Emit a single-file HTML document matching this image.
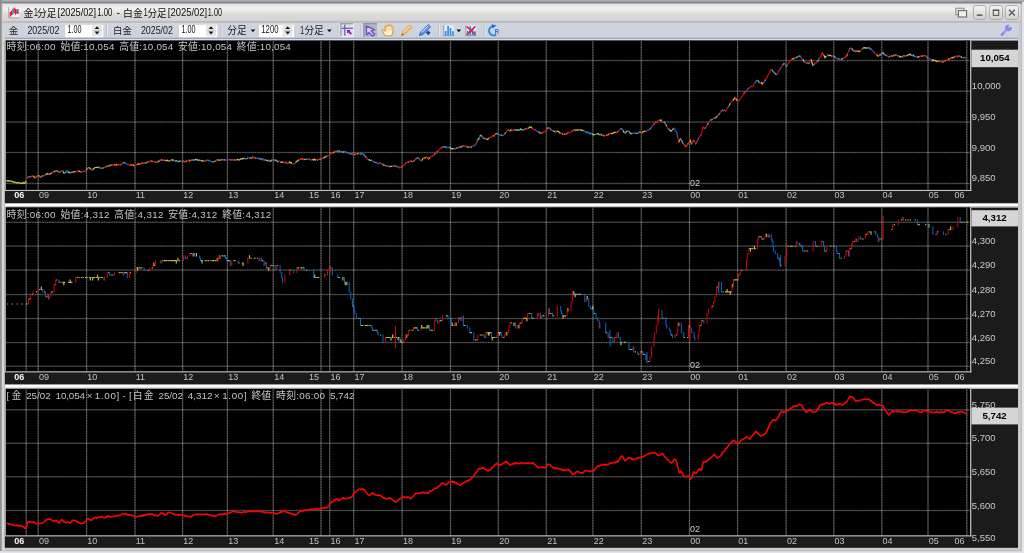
<!DOCTYPE html>
<html><head><meta charset="utf-8"><title>chart</title>
<style>html,body{margin:0;padding:0;background:#e4e4ec;overflow:hidden}body{width:1024px;height:553px;font-family:"Liberation Sans",sans-serif}svg text{white-space:pre;font-family:"Liberation Sans","Noto Sans CJK JP",sans-serif}
.xa{font-size:9px;fill:#c0c0c0}.xb{font-size:9px;fill:#f4f4f4;font-weight:bold}.ya{font-size:9.5px;fill:#c8c8c8}.mk{font-size:9px;fill:#c8c8c8}.in{font-size:9.8px;fill:#c4c4c4}.pt{font-size:9.7px;font-weight:bold;fill:#000}</style></head>
<body>
<svg width="1024" height="553" viewBox="0 0 1024 553" style="display:block">
<defs>
<linearGradient id="tb" x1="0" y1="0" x2="0" y2="1"><stop offset="0" stop-color="#e3e3e3"/><stop offset="0.3" stop-color="#f0f0f0"/><stop offset="0.62" stop-color="#d9d9d9"/><stop offset="1" stop-color="#d5d5d5"/></linearGradient>
<linearGradient id="btn" x1="0" y1="0" x2="0" y2="1"><stop offset="0" stop-color="#f6f6f6"/><stop offset="1" stop-color="#cfcfcf"/></linearGradient>
<linearGradient id="tool" x1="0" y1="0" x2="0" y2="1"><stop offset="0" stop-color="#d1d5df"/><stop offset="1" stop-color="#cdd1dc"/></linearGradient>
</defs>
<rect x="0" y="0" width="1024" height="553" fill="#e4e4ec"/>
<rect x="0" y="0" width="1024" height="2.0" fill="#a9adb9"/>
<rect x="0" y="1.6" width="1022" height="2.4" fill="#868686"/>
<rect x="0" y="0" width="1.8" height="551" fill="#8e8e90"/>
<rect x="1.8" y="3.9" width="1020.1" height="547.4" fill="#b6b6b6"/>
<rect x="2.2" y="3.6" width="1019" height="547" fill="#c9c9c9"/>
<rect x="2.2" y="3.6" width="2.6" height="547" fill="#d6d6d6"/>
<rect x="3" y="3.8" width="1017.2" height="18" fill="url(#tb)"/>
<rect x="5" y="21.8" width="1013.5" height="16.6" fill="url(#tool)"/>
<rect x="3" y="20.8" width="1017.2" height="2.2" fill="#c6c6c8"/>
<rect x="3" y="21.3" width="1017.2" height="1.2" fill="#b8b8ba"/>
<rect x="5" y="37.8" width="1013.5" height="1.1" fill="#8493b2"/>
<rect x="5" y="38.8" width="1013.5" height="1.9" fill="#d9dde5"/>
<rect x="4.8" y="40.6" width="1013.2" height="507.2" fill="#1b1b1b"/>
<rect x="4.8" y="203.4" width="1013.2" height="4.0" fill="#ffffff"/>
<rect x="4.8" y="203.4" width="1013.2" height="0.5" fill="#d4d4d4"/>
<rect x="4.8" y="206.2" width="1013.2" height="1.2" fill="#b4b4b4"/>
<rect x="4.8" y="384.6" width="1013.2" height="4.2" fill="#ffffff"/>
<rect x="4.8" y="384.6" width="1013.2" height="0.5" fill="#d4d4d4"/>
<rect x="4.8" y="387.6" width="1013.2" height="1.2" fill="#b4b4b4"/>
<rect x="5.8" y="40.6" width="964.6" height="149.8" fill="#000"/>
<line x1="26.2" y1="40.6" x2="26.2" y2="190.4" stroke="#262626" stroke-width="1.5"/>
<line x1="26.2" y1="40.6" x2="26.2" y2="190.4" stroke="#8c8c8c" stroke-width="0.85" stroke-dasharray="0.82 0.82"/>
<line x1="38.2" y1="40.6" x2="38.2" y2="190.4" stroke="#262626" stroke-width="1.5"/>
<line x1="38.2" y1="40.6" x2="38.2" y2="190.4" stroke="#8c8c8c" stroke-width="0.85" stroke-dasharray="0.82 0.82"/>
<line x1="86.6" y1="40.6" x2="86.6" y2="190.4" stroke="#262626" stroke-width="1.5"/>
<line x1="86.6" y1="40.6" x2="86.6" y2="190.4" stroke="#8c8c8c" stroke-width="0.85" stroke-dasharray="0.82 0.82"/>
<line x1="135" y1="40.6" x2="135" y2="190.4" stroke="#262626" stroke-width="1.5"/>
<line x1="135" y1="40.6" x2="135" y2="190.4" stroke="#8c8c8c" stroke-width="0.85" stroke-dasharray="0.82 0.82"/>
<line x1="182.6" y1="40.6" x2="182.6" y2="190.4" stroke="#262626" stroke-width="1.5"/>
<line x1="182.6" y1="40.6" x2="182.6" y2="190.4" stroke="#8c8c8c" stroke-width="0.85" stroke-dasharray="0.82 0.82"/>
<line x1="227.4" y1="40.6" x2="227.4" y2="190.4" stroke="#262626" stroke-width="1.5"/>
<line x1="227.4" y1="40.6" x2="227.4" y2="190.4" stroke="#8c8c8c" stroke-width="0.85" stroke-dasharray="0.82 0.82"/>
<line x1="273.2" y1="40.6" x2="273.2" y2="190.4" stroke="#262626" stroke-width="1.5"/>
<line x1="273.2" y1="40.6" x2="273.2" y2="190.4" stroke="#8c8c8c" stroke-width="0.85" stroke-dasharray="0.82 0.82"/>
<line x1="321" y1="40.6" x2="321" y2="190.4" stroke="#262626" stroke-width="1.5"/>
<line x1="321" y1="40.6" x2="321" y2="190.4" stroke="#8c8c8c" stroke-width="0.85" stroke-dasharray="0.82 0.82"/>
<line x1="329.7" y1="40.6" x2="329.7" y2="190.4" stroke="#262626" stroke-width="1.5"/>
<line x1="329.7" y1="40.6" x2="329.7" y2="190.4" stroke="#8c8c8c" stroke-width="0.85" stroke-dasharray="0.82 0.82"/>
<line x1="353.7" y1="40.6" x2="353.7" y2="190.4" stroke="#262626" stroke-width="1.5"/>
<line x1="353.7" y1="40.6" x2="353.7" y2="190.4" stroke="#8c8c8c" stroke-width="0.85" stroke-dasharray="0.82 0.82"/>
<line x1="402.1" y1="40.6" x2="402.1" y2="190.4" stroke="#262626" stroke-width="1.5"/>
<line x1="402.1" y1="40.6" x2="402.1" y2="190.4" stroke="#8c8c8c" stroke-width="0.85" stroke-dasharray="0.82 0.82"/>
<line x1="450.5" y1="40.6" x2="450.5" y2="190.4" stroke="#262626" stroke-width="1.5"/>
<line x1="450.5" y1="40.6" x2="450.5" y2="190.4" stroke="#8c8c8c" stroke-width="0.85" stroke-dasharray="0.82 0.82"/>
<line x1="498.3" y1="40.6" x2="498.3" y2="190.4" stroke="#262626" stroke-width="1.5"/>
<line x1="498.3" y1="40.6" x2="498.3" y2="190.4" stroke="#8c8c8c" stroke-width="0.85" stroke-dasharray="0.82 0.82"/>
<line x1="546.3" y1="40.6" x2="546.3" y2="190.4" stroke="#262626" stroke-width="1.5"/>
<line x1="546.3" y1="40.6" x2="546.3" y2="190.4" stroke="#8c8c8c" stroke-width="0.85" stroke-dasharray="0.82 0.82"/>
<line x1="592.9" y1="40.6" x2="592.9" y2="190.4" stroke="#262626" stroke-width="1.5"/>
<line x1="592.9" y1="40.6" x2="592.9" y2="190.4" stroke="#8c8c8c" stroke-width="0.85" stroke-dasharray="0.82 0.82"/>
<line x1="641.3" y1="40.6" x2="641.3" y2="190.4" stroke="#262626" stroke-width="1.5"/>
<line x1="641.3" y1="40.6" x2="641.3" y2="190.4" stroke="#8c8c8c" stroke-width="0.85" stroke-dasharray="0.82 0.82"/>
<line x1="689.5" y1="40.6" x2="689.5" y2="190.4" stroke="#262626" stroke-width="1.5"/>
<line x1="689.5" y1="40.6" x2="689.5" y2="190.4" stroke="#8c8c8c" stroke-width="0.85" stroke-dasharray="0.82 0.82"/>
<line x1="737.6" y1="40.6" x2="737.6" y2="190.4" stroke="#262626" stroke-width="1.5"/>
<line x1="737.6" y1="40.6" x2="737.6" y2="190.4" stroke="#8c8c8c" stroke-width="0.85" stroke-dasharray="0.82 0.82"/>
<line x1="786.1" y1="40.6" x2="786.1" y2="190.4" stroke="#262626" stroke-width="1.5"/>
<line x1="786.1" y1="40.6" x2="786.1" y2="190.4" stroke="#8c8c8c" stroke-width="0.85" stroke-dasharray="0.82 0.82"/>
<line x1="833.8" y1="40.6" x2="833.8" y2="190.4" stroke="#262626" stroke-width="1.5"/>
<line x1="833.8" y1="40.6" x2="833.8" y2="190.4" stroke="#8c8c8c" stroke-width="0.85" stroke-dasharray="0.82 0.82"/>
<line x1="881.8" y1="40.6" x2="881.8" y2="190.4" stroke="#262626" stroke-width="1.5"/>
<line x1="881.8" y1="40.6" x2="881.8" y2="190.4" stroke="#8c8c8c" stroke-width="0.85" stroke-dasharray="0.82 0.82"/>
<line x1="928" y1="40.6" x2="928" y2="190.4" stroke="#262626" stroke-width="1.5"/>
<line x1="928" y1="40.6" x2="928" y2="190.4" stroke="#8c8c8c" stroke-width="0.85" stroke-dasharray="0.82 0.82"/>
<line x1="966.8" y1="40.6" x2="966.8" y2="190.4" stroke="#262626" stroke-width="1.5"/>
<line x1="966.8" y1="40.6" x2="966.8" y2="190.4" stroke="#8c8c8c" stroke-width="0.85" stroke-dasharray="0.82 0.82"/>
<g style="mix-blend-mode:screen"><line x1="5.8" y1="60.6" x2="970.4" y2="60.6" stroke="#262626" stroke-width="1.5"/><line x1="5.8" y1="60.6" x2="970.4" y2="60.6" stroke="#707070" stroke-width="0.85" stroke-dasharray="0.82 0.82"/></g>
<g style="mix-blend-mode:screen"><line x1="5.8" y1="91.2" x2="970.4" y2="91.2" stroke="#262626" stroke-width="1.5"/><line x1="5.8" y1="91.2" x2="970.4" y2="91.2" stroke="#707070" stroke-width="0.85" stroke-dasharray="0.82 0.82"/></g>
<g style="mix-blend-mode:screen"><line x1="5.8" y1="122.1" x2="970.4" y2="122.1" stroke="#262626" stroke-width="1.5"/><line x1="5.8" y1="122.1" x2="970.4" y2="122.1" stroke="#707070" stroke-width="0.85" stroke-dasharray="0.82 0.82"/></g>
<g style="mix-blend-mode:screen"><line x1="5.8" y1="152.5" x2="970.4" y2="152.5" stroke="#262626" stroke-width="1.5"/><line x1="5.8" y1="152.5" x2="970.4" y2="152.5" stroke="#707070" stroke-width="0.85" stroke-dasharray="0.82 0.82"/></g>
<g style="mix-blend-mode:screen"><line x1="5.8" y1="183.4" x2="970.4" y2="183.4" stroke="#262626" stroke-width="1.5"/><line x1="5.8" y1="183.4" x2="970.4" y2="183.4" stroke="#707070" stroke-width="0.85" stroke-dasharray="0.82 0.82"/></g>
<rect x="4.8" y="40.6" width="1.0" height="149.8" fill="#bdbdbd"/>
<rect x="4.8" y="189.9" width="966.6" height="1.1" fill="#c6c6c6"/>
<rect x="970.1" y="40.6" width="1.2" height="150.4" fill="#c6c6c6"/>
<text class="xb" x="14.33" y="198.3">06</text>
<text class="xa" x="38.93" y="198.3">09</text>
<text class="xa" x="87.33" y="198.3">10</text>
<text class="xa" x="135.73" y="198.3">11</text>
<text class="xa" x="183.33" y="198.3">12</text>
<text class="xa" x="228.13" y="198.3">13</text>
<text class="xa" x="274.13" y="198.3">14</text>
<text class="xa" x="308.93" y="198.3">15</text>
<text class="xa" x="330.53" y="198.3">16</text>
<text class="xa" x="354.53" y="198.3">17</text>
<text class="xa" x="402.93" y="198.3">18</text>
<text class="xa" x="451.33" y="198.3">19</text>
<text class="xa" x="499.13" y="198.3">20</text>
<text class="xa" x="547.13" y="198.3">21</text>
<text class="xa" x="593.73" y="198.3">22</text>
<text class="xa" x="642.13" y="198.3">23</text>
<text class="xa" x="690.33" y="198.3">00</text>
<text class="xa" x="738.33" y="198.3">01</text>
<text class="xa" x="786.93" y="198.3">02</text>
<text class="xa" x="834.53" y="198.3">03</text>
<text class="xa" x="882.53" y="198.3">04</text>
<text class="xa" x="928.73" y="198.3">05</text>
<text class="xa" x="954.53" y="198.3">06</text>
<text class="ya" x="971.85" y="58.6">10,050</text>
<text class="ya" x="971.85" y="89.2">10,000</text>
<text class="ya" x="971.85" y="120.1">9,950</text>
<text class="ya" x="971.85" y="150.5">9,900</text>
<text class="ya" x="971.85" y="181.4">9,850</text>
<text class="mk" x="690.01" y="186.2">02</text>
<rect x="5.8" y="207.4" width="964.6" height="164.4" fill="#000"/>
<line x1="26.2" y1="207.4" x2="26.2" y2="371.8" stroke="#262626" stroke-width="1.5"/>
<line x1="26.2" y1="207.4" x2="26.2" y2="371.8" stroke="#8c8c8c" stroke-width="0.85" stroke-dasharray="0.82 0.82"/>
<line x1="38.2" y1="207.4" x2="38.2" y2="371.8" stroke="#262626" stroke-width="1.5"/>
<line x1="38.2" y1="207.4" x2="38.2" y2="371.8" stroke="#8c8c8c" stroke-width="0.85" stroke-dasharray="0.82 0.82"/>
<line x1="86.6" y1="207.4" x2="86.6" y2="371.8" stroke="#262626" stroke-width="1.5"/>
<line x1="86.6" y1="207.4" x2="86.6" y2="371.8" stroke="#8c8c8c" stroke-width="0.85" stroke-dasharray="0.82 0.82"/>
<line x1="135" y1="207.4" x2="135" y2="371.8" stroke="#262626" stroke-width="1.5"/>
<line x1="135" y1="207.4" x2="135" y2="371.8" stroke="#8c8c8c" stroke-width="0.85" stroke-dasharray="0.82 0.82"/>
<line x1="182.6" y1="207.4" x2="182.6" y2="371.8" stroke="#262626" stroke-width="1.5"/>
<line x1="182.6" y1="207.4" x2="182.6" y2="371.8" stroke="#8c8c8c" stroke-width="0.85" stroke-dasharray="0.82 0.82"/>
<line x1="227.4" y1="207.4" x2="227.4" y2="371.8" stroke="#262626" stroke-width="1.5"/>
<line x1="227.4" y1="207.4" x2="227.4" y2="371.8" stroke="#8c8c8c" stroke-width="0.85" stroke-dasharray="0.82 0.82"/>
<line x1="273.2" y1="207.4" x2="273.2" y2="371.8" stroke="#262626" stroke-width="1.5"/>
<line x1="273.2" y1="207.4" x2="273.2" y2="371.8" stroke="#8c8c8c" stroke-width="0.85" stroke-dasharray="0.82 0.82"/>
<line x1="321" y1="207.4" x2="321" y2="371.8" stroke="#262626" stroke-width="1.5"/>
<line x1="321" y1="207.4" x2="321" y2="371.8" stroke="#8c8c8c" stroke-width="0.85" stroke-dasharray="0.82 0.82"/>
<line x1="329.7" y1="207.4" x2="329.7" y2="371.8" stroke="#262626" stroke-width="1.5"/>
<line x1="329.7" y1="207.4" x2="329.7" y2="371.8" stroke="#8c8c8c" stroke-width="0.85" stroke-dasharray="0.82 0.82"/>
<line x1="353.7" y1="207.4" x2="353.7" y2="371.8" stroke="#262626" stroke-width="1.5"/>
<line x1="353.7" y1="207.4" x2="353.7" y2="371.8" stroke="#8c8c8c" stroke-width="0.85" stroke-dasharray="0.82 0.82"/>
<line x1="402.1" y1="207.4" x2="402.1" y2="371.8" stroke="#262626" stroke-width="1.5"/>
<line x1="402.1" y1="207.4" x2="402.1" y2="371.8" stroke="#8c8c8c" stroke-width="0.85" stroke-dasharray="0.82 0.82"/>
<line x1="450.5" y1="207.4" x2="450.5" y2="371.8" stroke="#262626" stroke-width="1.5"/>
<line x1="450.5" y1="207.4" x2="450.5" y2="371.8" stroke="#8c8c8c" stroke-width="0.85" stroke-dasharray="0.82 0.82"/>
<line x1="498.3" y1="207.4" x2="498.3" y2="371.8" stroke="#262626" stroke-width="1.5"/>
<line x1="498.3" y1="207.4" x2="498.3" y2="371.8" stroke="#8c8c8c" stroke-width="0.85" stroke-dasharray="0.82 0.82"/>
<line x1="546.3" y1="207.4" x2="546.3" y2="371.8" stroke="#262626" stroke-width="1.5"/>
<line x1="546.3" y1="207.4" x2="546.3" y2="371.8" stroke="#8c8c8c" stroke-width="0.85" stroke-dasharray="0.82 0.82"/>
<line x1="592.9" y1="207.4" x2="592.9" y2="371.8" stroke="#262626" stroke-width="1.5"/>
<line x1="592.9" y1="207.4" x2="592.9" y2="371.8" stroke="#8c8c8c" stroke-width="0.85" stroke-dasharray="0.82 0.82"/>
<line x1="641.3" y1="207.4" x2="641.3" y2="371.8" stroke="#262626" stroke-width="1.5"/>
<line x1="641.3" y1="207.4" x2="641.3" y2="371.8" stroke="#8c8c8c" stroke-width="0.85" stroke-dasharray="0.82 0.82"/>
<line x1="689.5" y1="207.4" x2="689.5" y2="371.8" stroke="#262626" stroke-width="1.5"/>
<line x1="689.5" y1="207.4" x2="689.5" y2="371.8" stroke="#8c8c8c" stroke-width="0.85" stroke-dasharray="0.82 0.82"/>
<line x1="737.6" y1="207.4" x2="737.6" y2="371.8" stroke="#262626" stroke-width="1.5"/>
<line x1="737.6" y1="207.4" x2="737.6" y2="371.8" stroke="#8c8c8c" stroke-width="0.85" stroke-dasharray="0.82 0.82"/>
<line x1="786.1" y1="207.4" x2="786.1" y2="371.8" stroke="#262626" stroke-width="1.5"/>
<line x1="786.1" y1="207.4" x2="786.1" y2="371.8" stroke="#8c8c8c" stroke-width="0.85" stroke-dasharray="0.82 0.82"/>
<line x1="833.8" y1="207.4" x2="833.8" y2="371.8" stroke="#262626" stroke-width="1.5"/>
<line x1="833.8" y1="207.4" x2="833.8" y2="371.8" stroke="#8c8c8c" stroke-width="0.85" stroke-dasharray="0.82 0.82"/>
<line x1="881.8" y1="207.4" x2="881.8" y2="371.8" stroke="#262626" stroke-width="1.5"/>
<line x1="881.8" y1="207.4" x2="881.8" y2="371.8" stroke="#8c8c8c" stroke-width="0.85" stroke-dasharray="0.82 0.82"/>
<line x1="928" y1="207.4" x2="928" y2="371.8" stroke="#262626" stroke-width="1.5"/>
<line x1="928" y1="207.4" x2="928" y2="371.8" stroke="#8c8c8c" stroke-width="0.85" stroke-dasharray="0.82 0.82"/>
<line x1="966.8" y1="207.4" x2="966.8" y2="371.8" stroke="#262626" stroke-width="1.5"/>
<line x1="966.8" y1="207.4" x2="966.8" y2="371.8" stroke="#8c8c8c" stroke-width="0.85" stroke-dasharray="0.82 0.82"/>
<g style="mix-blend-mode:screen"><line x1="5.8" y1="222.3" x2="970.4" y2="222.3" stroke="#262626" stroke-width="1.5"/><line x1="5.8" y1="222.3" x2="970.4" y2="222.3" stroke="#707070" stroke-width="0.85" stroke-dasharray="0.82 0.82"/></g>
<g style="mix-blend-mode:screen"><line x1="5.8" y1="246.1" x2="970.4" y2="246.1" stroke="#262626" stroke-width="1.5"/><line x1="5.8" y1="246.1" x2="970.4" y2="246.1" stroke="#707070" stroke-width="0.85" stroke-dasharray="0.82 0.82"/></g>
<g style="mix-blend-mode:screen"><line x1="5.8" y1="270.1" x2="970.4" y2="270.1" stroke="#262626" stroke-width="1.5"/><line x1="5.8" y1="270.1" x2="970.4" y2="270.1" stroke="#707070" stroke-width="0.85" stroke-dasharray="0.82 0.82"/></g>
<g style="mix-blend-mode:screen"><line x1="5.8" y1="294.6" x2="970.4" y2="294.6" stroke="#262626" stroke-width="1.5"/><line x1="5.8" y1="294.6" x2="970.4" y2="294.6" stroke="#707070" stroke-width="0.85" stroke-dasharray="0.82 0.82"/></g>
<g style="mix-blend-mode:screen"><line x1="5.8" y1="318.6" x2="970.4" y2="318.6" stroke="#262626" stroke-width="1.5"/><line x1="5.8" y1="318.6" x2="970.4" y2="318.6" stroke="#707070" stroke-width="0.85" stroke-dasharray="0.82 0.82"/></g>
<g style="mix-blend-mode:screen"><line x1="5.8" y1="342.6" x2="970.4" y2="342.6" stroke="#262626" stroke-width="1.5"/><line x1="5.8" y1="342.6" x2="970.4" y2="342.6" stroke="#707070" stroke-width="0.85" stroke-dasharray="0.82 0.82"/></g>
<g style="mix-blend-mode:screen"><line x1="5.8" y1="366.3" x2="970.4" y2="366.3" stroke="#262626" stroke-width="1.5"/><line x1="5.8" y1="366.3" x2="970.4" y2="366.3" stroke="#707070" stroke-width="0.85" stroke-dasharray="0.82 0.82"/></g>
<rect x="4.8" y="207.4" width="1.0" height="164.4" fill="#bdbdbd"/>
<rect x="4.8" y="371.3" width="966.6" height="1.1" fill="#c6c6c6"/>
<rect x="970.1" y="207.4" width="1.2" height="165.0" fill="#c6c6c6"/>
<text class="xb" x="14.33" y="379.7">06</text>
<text class="xa" x="38.93" y="379.7">09</text>
<text class="xa" x="87.33" y="379.7">10</text>
<text class="xa" x="135.73" y="379.7">11</text>
<text class="xa" x="183.33" y="379.7">12</text>
<text class="xa" x="228.13" y="379.7">13</text>
<text class="xa" x="274.13" y="379.7">14</text>
<text class="xa" x="308.93" y="379.7">15</text>
<text class="xa" x="330.53" y="379.7">16</text>
<text class="xa" x="354.53" y="379.7">17</text>
<text class="xa" x="402.93" y="379.7">18</text>
<text class="xa" x="451.33" y="379.7">19</text>
<text class="xa" x="499.13" y="379.7">20</text>
<text class="xa" x="547.13" y="379.7">21</text>
<text class="xa" x="593.73" y="379.7">22</text>
<text class="xa" x="642.13" y="379.7">23</text>
<text class="xa" x="690.33" y="379.7">00</text>
<text class="xa" x="738.33" y="379.7">01</text>
<text class="xa" x="786.93" y="379.7">02</text>
<text class="xa" x="834.53" y="379.7">03</text>
<text class="xa" x="882.53" y="379.7">04</text>
<text class="xa" x="928.73" y="379.7">05</text>
<text class="xa" x="954.53" y="379.7">06</text>
<text class="ya" x="971.85" y="220.3">4,310</text>
<text class="ya" x="971.85" y="244.1">4,300</text>
<text class="ya" x="971.85" y="268.1">4,290</text>
<text class="ya" x="971.85" y="292.6">4,280</text>
<text class="ya" x="971.85" y="316.6">4,270</text>
<text class="ya" x="971.85" y="340.6">4,260</text>
<text class="ya" x="971.85" y="364.3">4,250</text>
<text class="mk" x="690.01" y="367.6">02</text>
<rect x="5.8" y="388.8" width="964.6" height="147.0" fill="#000"/>
<line x1="26.2" y1="388.8" x2="26.2" y2="535.8" stroke="#262626" stroke-width="1.5"/>
<line x1="26.2" y1="388.8" x2="26.2" y2="535.8" stroke="#8c8c8c" stroke-width="0.85" stroke-dasharray="0.82 0.82"/>
<line x1="38.2" y1="388.8" x2="38.2" y2="535.8" stroke="#262626" stroke-width="1.5"/>
<line x1="38.2" y1="388.8" x2="38.2" y2="535.8" stroke="#8c8c8c" stroke-width="0.85" stroke-dasharray="0.82 0.82"/>
<line x1="86.6" y1="388.8" x2="86.6" y2="535.8" stroke="#262626" stroke-width="1.5"/>
<line x1="86.6" y1="388.8" x2="86.6" y2="535.8" stroke="#8c8c8c" stroke-width="0.85" stroke-dasharray="0.82 0.82"/>
<line x1="135" y1="388.8" x2="135" y2="535.8" stroke="#262626" stroke-width="1.5"/>
<line x1="135" y1="388.8" x2="135" y2="535.8" stroke="#8c8c8c" stroke-width="0.85" stroke-dasharray="0.82 0.82"/>
<line x1="182.6" y1="388.8" x2="182.6" y2="535.8" stroke="#262626" stroke-width="1.5"/>
<line x1="182.6" y1="388.8" x2="182.6" y2="535.8" stroke="#8c8c8c" stroke-width="0.85" stroke-dasharray="0.82 0.82"/>
<line x1="227.4" y1="388.8" x2="227.4" y2="535.8" stroke="#262626" stroke-width="1.5"/>
<line x1="227.4" y1="388.8" x2="227.4" y2="535.8" stroke="#8c8c8c" stroke-width="0.85" stroke-dasharray="0.82 0.82"/>
<line x1="273.2" y1="388.8" x2="273.2" y2="535.8" stroke="#262626" stroke-width="1.5"/>
<line x1="273.2" y1="388.8" x2="273.2" y2="535.8" stroke="#8c8c8c" stroke-width="0.85" stroke-dasharray="0.82 0.82"/>
<line x1="321" y1="388.8" x2="321" y2="535.8" stroke="#262626" stroke-width="1.5"/>
<line x1="321" y1="388.8" x2="321" y2="535.8" stroke="#8c8c8c" stroke-width="0.85" stroke-dasharray="0.82 0.82"/>
<line x1="329.7" y1="388.8" x2="329.7" y2="535.8" stroke="#262626" stroke-width="1.5"/>
<line x1="329.7" y1="388.8" x2="329.7" y2="535.8" stroke="#8c8c8c" stroke-width="0.85" stroke-dasharray="0.82 0.82"/>
<line x1="353.7" y1="388.8" x2="353.7" y2="535.8" stroke="#262626" stroke-width="1.5"/>
<line x1="353.7" y1="388.8" x2="353.7" y2="535.8" stroke="#8c8c8c" stroke-width="0.85" stroke-dasharray="0.82 0.82"/>
<line x1="402.1" y1="388.8" x2="402.1" y2="535.8" stroke="#262626" stroke-width="1.5"/>
<line x1="402.1" y1="388.8" x2="402.1" y2="535.8" stroke="#8c8c8c" stroke-width="0.85" stroke-dasharray="0.82 0.82"/>
<line x1="450.5" y1="388.8" x2="450.5" y2="535.8" stroke="#262626" stroke-width="1.5"/>
<line x1="450.5" y1="388.8" x2="450.5" y2="535.8" stroke="#8c8c8c" stroke-width="0.85" stroke-dasharray="0.82 0.82"/>
<line x1="498.3" y1="388.8" x2="498.3" y2="535.8" stroke="#262626" stroke-width="1.5"/>
<line x1="498.3" y1="388.8" x2="498.3" y2="535.8" stroke="#8c8c8c" stroke-width="0.85" stroke-dasharray="0.82 0.82"/>
<line x1="546.3" y1="388.8" x2="546.3" y2="535.8" stroke="#262626" stroke-width="1.5"/>
<line x1="546.3" y1="388.8" x2="546.3" y2="535.8" stroke="#8c8c8c" stroke-width="0.85" stroke-dasharray="0.82 0.82"/>
<line x1="592.9" y1="388.8" x2="592.9" y2="535.8" stroke="#262626" stroke-width="1.5"/>
<line x1="592.9" y1="388.8" x2="592.9" y2="535.8" stroke="#8c8c8c" stroke-width="0.85" stroke-dasharray="0.82 0.82"/>
<line x1="641.3" y1="388.8" x2="641.3" y2="535.8" stroke="#262626" stroke-width="1.5"/>
<line x1="641.3" y1="388.8" x2="641.3" y2="535.8" stroke="#8c8c8c" stroke-width="0.85" stroke-dasharray="0.82 0.82"/>
<line x1="689.5" y1="388.8" x2="689.5" y2="535.8" stroke="#262626" stroke-width="1.5"/>
<line x1="689.5" y1="388.8" x2="689.5" y2="535.8" stroke="#8c8c8c" stroke-width="0.85" stroke-dasharray="0.82 0.82"/>
<line x1="737.6" y1="388.8" x2="737.6" y2="535.8" stroke="#262626" stroke-width="1.5"/>
<line x1="737.6" y1="388.8" x2="737.6" y2="535.8" stroke="#8c8c8c" stroke-width="0.85" stroke-dasharray="0.82 0.82"/>
<line x1="786.1" y1="388.8" x2="786.1" y2="535.8" stroke="#262626" stroke-width="1.5"/>
<line x1="786.1" y1="388.8" x2="786.1" y2="535.8" stroke="#8c8c8c" stroke-width="0.85" stroke-dasharray="0.82 0.82"/>
<line x1="833.8" y1="388.8" x2="833.8" y2="535.8" stroke="#262626" stroke-width="1.5"/>
<line x1="833.8" y1="388.8" x2="833.8" y2="535.8" stroke="#8c8c8c" stroke-width="0.85" stroke-dasharray="0.82 0.82"/>
<line x1="881.8" y1="388.8" x2="881.8" y2="535.8" stroke="#262626" stroke-width="1.5"/>
<line x1="881.8" y1="388.8" x2="881.8" y2="535.8" stroke="#8c8c8c" stroke-width="0.85" stroke-dasharray="0.82 0.82"/>
<line x1="928" y1="388.8" x2="928" y2="535.8" stroke="#262626" stroke-width="1.5"/>
<line x1="928" y1="388.8" x2="928" y2="535.8" stroke="#8c8c8c" stroke-width="0.85" stroke-dasharray="0.82 0.82"/>
<line x1="966.8" y1="388.8" x2="966.8" y2="535.8" stroke="#262626" stroke-width="1.5"/>
<line x1="966.8" y1="388.8" x2="966.8" y2="535.8" stroke="#8c8c8c" stroke-width="0.85" stroke-dasharray="0.82 0.82"/>
<g style="mix-blend-mode:screen"><line x1="5.8" y1="409.8" x2="970.4" y2="409.8" stroke="#262626" stroke-width="1.5"/><line x1="5.8" y1="409.8" x2="970.4" y2="409.8" stroke="#707070" stroke-width="0.85" stroke-dasharray="0.82 0.82"/></g>
<g style="mix-blend-mode:screen"><line x1="5.8" y1="443.3" x2="970.4" y2="443.3" stroke="#262626" stroke-width="1.5"/><line x1="5.8" y1="443.3" x2="970.4" y2="443.3" stroke="#707070" stroke-width="0.85" stroke-dasharray="0.82 0.82"/></g>
<g style="mix-blend-mode:screen"><line x1="5.8" y1="476.8" x2="970.4" y2="476.8" stroke="#262626" stroke-width="1.5"/><line x1="5.8" y1="476.8" x2="970.4" y2="476.8" stroke="#707070" stroke-width="0.85" stroke-dasharray="0.82 0.82"/></g>
<g style="mix-blend-mode:screen"><line x1="5.8" y1="510.5" x2="970.4" y2="510.5" stroke="#262626" stroke-width="1.5"/><line x1="5.8" y1="510.5" x2="970.4" y2="510.5" stroke="#707070" stroke-width="0.85" stroke-dasharray="0.82 0.82"/></g>
<rect x="4.8" y="388.8" width="1.0" height="147.0" fill="#bdbdbd"/>
<rect x="4.8" y="535.3" width="966.6" height="1.1" fill="#c6c6c6"/>
<rect x="970.1" y="388.8" width="1.2" height="147.6" fill="#c6c6c6"/>
<text class="xb" x="14.33" y="543.7">06</text>
<text class="xa" x="38.93" y="543.7">09</text>
<text class="xa" x="87.33" y="543.7">10</text>
<text class="xa" x="135.73" y="543.7">11</text>
<text class="xa" x="183.33" y="543.7">12</text>
<text class="xa" x="228.13" y="543.7">13</text>
<text class="xa" x="274.13" y="543.7">14</text>
<text class="xa" x="308.93" y="543.7">15</text>
<text class="xa" x="330.53" y="543.7">16</text>
<text class="xa" x="354.53" y="543.7">17</text>
<text class="xa" x="402.93" y="543.7">18</text>
<text class="xa" x="451.33" y="543.7">19</text>
<text class="xa" x="499.13" y="543.7">20</text>
<text class="xa" x="547.13" y="543.7">21</text>
<text class="xa" x="593.73" y="543.7">22</text>
<text class="xa" x="642.13" y="543.7">23</text>
<text class="xa" x="690.33" y="543.7">00</text>
<text class="xa" x="738.33" y="543.7">01</text>
<text class="xa" x="786.93" y="543.7">02</text>
<text class="xa" x="834.53" y="543.7">03</text>
<text class="xa" x="882.53" y="543.7">04</text>
<text class="xa" x="928.73" y="543.7">05</text>
<text class="xa" x="954.53" y="543.7">06</text>
<text class="ya" x="971.85" y="407.8">5,750</text>
<text class="ya" x="971.85" y="441.3">5,700</text>
<text class="ya" x="971.85" y="474.8">5,650</text>
<text class="ya" x="971.85" y="508.5">5,600</text>
<text class="ya" x="971.85" y="541.3">5,550</text>
<text class="mk" x="690.01" y="531.6">02</text>
<path d="M6.5 180.8L7.3 180.7M7.3 180.7L8.1 181.3M8.1 181.3L8.9 180.7M8.9 180.7L9.7 181.2M9.7 181.2L10.5 181.1M10.5 181.1L11.3 180.9M11.3 180.9L12.1 181.7M12.1 181.7L12.9 181.5M12.9 181.5L13.7 182.3M13.7 182.3L14.5 182.1M14.5 182.1L15.3 182.2M15.3 182.2L16.1 182.6M16.1 182.6L17.0 183.1M17.0 183.1L17.8 182.4M17.8 182.4L18.6 182.6M18.6 182.6L19.4 183.1M19.4 183.1L20.2 183.5M20.2 183.5L21.0 183.1M21.0 183.1L21.8 182.9M21.8 182.9L22.6 183.5M22.6 183.5L23.4 182.5M23.4 182.5L24.2 183.4M24.2 183.4L25.0 182.8M25.0 182.8L25.8 181.6M27.4 177.4L28.2 177.6M29.0 176.6L29.8 176.7M30.6 176.7L31.4 176.4M33.0 176.0L33.8 176.6M33.8 176.6L34.6 177.4M34.6 177.4L35.4 177.8M36.2 176.9L37.1 176.2M37.9 175.8L38.7 175.8M38.7 175.8L39.5 176.0M40.3 176.9L41.1 177.1M41.9 176.1L42.7 176.1M42.7 176.1L43.5 175.6M45.9 174.2L46.7 174.6M46.7 174.6L47.5 173.3M47.5 173.3L48.3 173.9M49.1 174.5L49.9 174.0M49.9 174.0L50.7 173.9M50.7 173.9L51.5 172.8M53.9 171.6L54.7 171.7M54.7 171.7L55.5 170.8M56.3 171.0L57.2 170.8M57.2 170.8L58.0 171.5M58.8 172.0L59.6 172.3M62.8 171.1L63.6 172.8M63.6 172.8L64.4 173.0M64.4 173.0L65.2 172.9M66.0 172.2L66.8 171.1M67.6 171.5L68.4 172.3M68.4 172.3L69.2 172.1M69.2 172.1L70.0 173.1M70.8 172.5L71.6 172.3M71.6 172.3L72.4 172.0M73.2 172.6L74.0 171.7M74.0 171.7L74.8 171.7M74.8 171.7L75.6 171.6M78.1 171.2L78.9 171.1M78.9 171.1L79.7 171.6M79.7 171.6L80.5 171.8M82.9 171.5L83.7 171.2M86.1 170.1L86.9 169.2M86.9 169.2L87.7 168.4M88.5 167.5L89.3 167.6M89.3 167.6L90.1 168.6M90.1 168.6L90.9 169.1M92.5 169.9L93.3 169.0M93.3 169.0L94.1 168.3M94.1 168.3L94.9 167.8M94.9 167.8L95.7 167.5M95.7 167.5L96.5 167.3M96.5 167.3L97.4 167.5M97.4 167.5L98.2 167.6M98.2 167.6L99.0 167.0M100.6 167.9L101.4 168.2M102.2 168.3L103.0 168.0M103.0 168.0L103.8 167.7M106.2 166.6L107.0 166.3M107.0 166.3L107.8 166.2M108.6 165.9L109.4 165.9M109.4 165.9L110.2 165.3M110.2 165.3L111.0 165.0M111.0 165.0L111.8 165.0M111.8 165.0L112.6 164.7M114.2 164.4L115.0 165.3M115.8 165.0L116.6 164.5M116.6 164.5L117.5 164.6M118.3 164.6L119.1 164.6M120.7 164.8L121.5 164.5M123.1 163.0L123.9 162.4M123.9 162.4L124.7 162.7M130.3 165.1L131.1 164.7M131.1 164.7L131.9 165.2M132.7 164.6L133.5 165.2M133.5 165.2L134.3 165.8M136.7 164.5L137.6 164.3M137.6 164.3L138.4 163.9M138.4 163.9L139.2 164.3M140.0 163.8L140.8 163.9M142.4 162.9L143.2 163.4M144.8 163.1L145.6 162.8M145.6 162.8L146.4 162.7M147.2 162.4L148.0 161.6M148.8 161.8L149.6 161.4M151.2 161.0L152.0 161.3M152.0 161.3L152.8 161.3M155.2 161.6L156.0 162.2M157.7 162.2L158.5 161.4M158.5 161.4L159.3 160.8M160.1 160.4L160.9 160.0M161.7 159.6L162.5 160.0M163.3 160.4L164.1 160.5M164.9 160.2L165.7 160.5M165.7 160.5L166.5 160.8M166.5 160.8L167.3 160.2M167.3 160.2L168.1 160.9M168.1 160.9L168.9 161.0M168.9 161.0L169.7 160.7M169.7 160.7L170.5 160.6M171.3 160.1L172.1 159.7M172.1 159.7L172.9 160.5M172.9 160.5L173.7 160.1M175.3 161.1L176.1 160.7M176.1 160.7L176.9 160.8M177.8 161.6L178.6 161.5M178.6 161.5L179.4 161.0M179.4 161.0L180.2 161.1M182.6 161.7L183.4 160.9M184.2 161.6L185.0 161.7M185.8 161.3L186.6 160.9M189.0 160.2L189.8 161.1M189.8 161.1L190.6 160.5M191.4 160.2L192.2 160.4M193.0 159.7L193.8 160.0M194.6 160.0L195.4 159.4M195.4 159.4L196.2 159.6M196.2 159.6L197.0 159.8M197.0 159.8L197.9 159.9M197.9 159.9L198.7 160.4M198.7 160.4L199.5 160.1M200.3 160.5L201.1 160.3M201.1 160.3L201.9 161.2M201.9 161.2L202.7 160.7M202.7 160.7L203.5 161.0M203.5 161.0L204.3 161.2M205.9 160.5L206.7 160.4M208.3 160.4L209.1 160.7M211.5 161.5L212.3 161.6M213.9 161.6L214.7 161.4M214.7 161.4L215.5 161.2M217.1 159.8L218.0 160.0M218.0 160.0L218.8 160.0M218.8 160.0L219.6 160.3M219.6 160.3L220.4 159.5M221.2 160.0L222.0 159.6M222.0 159.6L222.8 159.6M224.4 159.8L225.2 159.9M230.8 159.9L231.6 159.6M232.4 159.7L233.2 159.6M234.0 160.1L234.8 159.8M236.4 160.1L237.2 159.3M237.2 159.3L238.1 159.6M238.1 159.6L238.9 160.0M238.9 160.0L239.7 159.9M239.7 159.9L240.5 159.0M240.5 159.0L241.3 158.9M241.3 158.9L242.1 159.1M242.1 159.1L242.9 158.5M242.9 158.5L243.7 158.6M243.7 158.6L244.5 158.2M245.3 158.7L246.1 158.7M246.9 158.7L247.7 157.8M250.1 157.4L250.9 158.1M250.9 158.1L251.7 158.1M252.5 157.2L253.3 157.8M254.9 157.5L255.7 158.3M258.2 158.4L259.0 158.7M259.8 158.8L260.6 158.8M260.6 158.8L261.4 159.1M262.2 159.7L263.0 159.1M264.6 159.9L265.4 159.6M266.2 160.2L267.0 160.7M267.0 160.7L267.8 160.7M267.8 160.7L268.6 160.2M269.4 161.2L270.2 160.9M270.2 160.9L271.0 161.1M271.0 161.1L271.8 160.0M273.4 159.9L274.2 160.6M275.0 160.0L275.8 160.1M275.8 160.1L276.6 160.7M276.6 160.7L277.4 161.4M277.4 161.4L278.3 161.6M280.7 162.3L281.5 162.1M281.5 162.1L282.3 162.4M282.3 162.4L283.1 161.8M285.5 162.6L286.3 162.4M288.7 162.9L289.5 161.9M289.5 161.9L290.3 162.8M290.3 162.8L291.1 162.3M291.1 162.3L291.9 163.6M295.9 162.2L296.7 161.3M296.7 161.3L297.5 161.0M297.5 161.0L298.4 160.1M298.4 160.1L299.2 159.7M300.8 159.1L301.6 159.1M302.4 159.1L303.2 159.1M304.0 159.7L304.8 159.2M304.8 159.2L305.6 159.5M305.6 159.5L306.4 159.2M308.8 159.4L309.6 159.2M312.0 159.4L312.8 159.6M312.8 159.6L313.6 160.1M313.6 160.1L314.4 159.2M314.4 159.2L315.2 160.0M315.2 160.0L316.0 159.5M317.6 159.9L318.5 159.4M319.3 159.4L320.1 159.3M320.1 159.3L320.9 159.3M323.3 158.0L324.1 157.6M324.1 157.6L324.9 157.1M324.9 157.1L325.7 156.8M325.7 156.8L326.5 156.2M330.5 153.6L331.3 152.9M332.9 152.9L333.7 152.3M333.7 152.3L334.5 151.7M335.3 151.4L336.1 151.3M336.9 151.4L337.7 150.9M338.6 151.0L339.4 150.8M339.4 150.8L340.2 151.7M341.0 151.8L341.8 151.5M342.6 151.3L343.4 152.2M343.4 152.2L344.2 151.7M347.4 152.8L348.2 153.1M349.8 153.7L350.6 153.4M351.4 154.0L352.2 154.1M353.8 154.7L354.6 154.4M354.6 154.4L355.4 154.3M357.0 153.8L357.8 153.4M357.8 153.4L358.7 153.6M359.5 153.5L360.3 153.6M361.1 153.9L361.9 153.4M363.5 154.8L364.3 154.5M365.1 156.3L365.9 157.3M368.3 159.7L369.1 159.7M369.1 159.7L369.9 160.2M369.9 160.2L370.7 160.6M370.7 160.6L371.5 160.2M374.7 162.2L375.5 162.5M375.5 162.5L376.3 162.5M378.8 163.5L379.6 163.2M382.8 164.2L383.6 165.2M383.6 165.2L384.4 165.2M385.2 165.6L386.0 165.9M389.2 166.6L390.0 166.5M390.0 166.5L390.8 166.3M390.8 166.3L391.6 166.3M391.6 166.3L392.4 166.4M394.8 166.0L395.6 165.9M398.9 167.3L399.7 167.7M401.3 167.4L402.1 166.7M408.5 162.3L409.3 161.4M410.9 161.0L411.7 161.3M411.7 161.3L412.5 161.7M413.3 161.4L414.1 160.7M415.7 158.9L416.5 158.4M418.1 158.1L419.0 158.4M421.4 160.6L422.2 159.9M422.2 159.9L423.0 158.3M423.8 158.2L424.6 158.0M424.6 158.0L425.4 157.6M425.4 157.6L426.2 157.3M427.0 157.5L427.8 157.9M428.6 159.2L429.4 157.9M429.4 157.9L430.2 157.7M434.2 154.7L435.0 153.7M436.6 152.5L437.4 151.3M442.3 147.2L443.1 146.8M443.9 146.7L444.7 147.0M445.5 147.0L446.3 147.6M449.5 147.0L450.3 148.1M450.3 148.1L451.1 148.3M451.1 148.3L451.9 148.9M451.9 148.9L452.7 148.6M452.7 148.6L453.5 148.7M453.5 148.7L454.3 148.6M455.9 148.5L456.7 148.0M458.3 147.6L459.2 147.2M460.0 147.1L460.8 147.4M460.8 147.4L461.6 146.3M462.4 146.6L463.2 145.8M466.4 146.4L467.2 147.1M467.2 147.1L468.0 147.2M468.0 147.2L468.8 147.2M470.4 147.3L471.2 147.1M471.2 147.1L472.0 146.4M477.6 140.4L478.4 138.7M478.4 138.7L479.3 138.2M480.1 135.9L480.9 135.1M480.9 135.1L481.7 136.1M483.3 138.1L484.1 138.7M484.1 138.7L484.9 138.2M486.5 138.9L487.3 139.5M487.3 139.5L488.1 139.0M488.1 139.0L488.9 138.2M492.9 135.6L493.7 135.9M493.7 135.9L494.5 135.4M495.3 134.3L496.1 133.4M496.1 133.4L496.9 133.7M497.7 134.0L498.5 134.6M501.0 135.1L501.8 135.3M501.8 135.3L502.6 135.6M505.0 133.5L505.8 132.7M508.2 130.2L509.0 130.4M509.8 131.0L510.6 130.0M510.6 130.0L511.4 130.4M511.4 130.4L512.2 130.4M513.8 129.8L514.6 129.8M515.4 129.7L516.2 129.8M516.2 129.8L517.0 129.8M517.0 129.8L517.8 130.4M517.8 130.4L518.6 130.2M519.5 130.2L520.3 129.2M520.3 129.2L521.1 129.2M521.1 129.2L521.9 129.9M521.9 129.9L522.7 130.1M523.5 129.5L524.3 129.6M525.1 128.9L525.9 128.9M527.5 128.5L528.3 128.1M528.3 128.1L529.1 127.7M529.1 127.7L529.9 126.9M529.9 126.9L530.7 127.1M530.7 127.1L531.5 127.5M531.5 127.5L532.3 128.3M538.7 131.6L539.6 133.0M540.4 132.7L541.2 133.3M542.0 132.9L542.8 132.4M546.8 129.0L547.6 128.2M548.4 127.9L549.2 128.0M550.0 128.6L550.8 129.3M553.2 131.0L554.0 131.2M554.0 131.2L554.8 131.8M554.8 131.8L555.6 131.4M556.4 131.7L557.2 131.2M557.2 131.2L558.0 131.3M558.0 131.3L558.8 131.8M558.8 131.8L559.7 133.0M559.7 133.0L560.5 133.2M562.1 133.4L562.9 134.4M562.9 134.4L563.7 134.5M564.5 134.0L565.3 133.6M566.1 133.8L566.9 133.9M567.7 132.9L568.5 132.4M572.5 131.1L573.3 130.5M574.1 130.0L574.9 129.7M574.9 129.7L575.7 130.5M576.5 129.8L577.3 130.4M577.3 130.4L578.1 129.7M578.1 129.7L578.9 129.7M579.8 130.3L580.6 129.8M580.6 129.8L581.4 130.5M581.4 130.5L582.2 130.4M582.2 130.4L583.0 130.3M583.0 130.3L583.8 130.7M586.2 132.5L587.0 131.9M587.8 132.5L588.6 132.6M589.4 133.8L590.2 133.2M591.8 133.7L592.6 134.4M592.6 134.4L593.4 134.8M593.4 134.8L594.2 134.7M594.2 134.7L595.0 134.4M595.0 134.4L595.8 134.5M596.6 134.4L597.4 133.6M597.4 133.6L598.2 133.6M598.2 133.6L599.0 134.7M599.0 134.7L599.9 134.7M600.7 134.2L601.5 135.2M601.5 135.2L602.3 135.2M603.1 135.4L603.9 135.7M603.9 135.7L604.7 135.8M606.3 135.4L607.1 135.0M607.9 135.3L608.7 134.0M610.3 133.4L611.1 133.3M611.1 133.3L611.9 133.7M611.9 133.7L612.7 133.5M612.7 133.5L613.5 132.9M613.5 132.9L614.3 132.2M614.3 132.2L615.1 132.5M615.1 132.5L615.9 132.2M616.7 132.6L617.5 131.6M620.8 129.0L621.6 128.7M623.2 130.5L624.0 132.5M624.0 132.5L624.8 132.7M625.6 132.9L626.4 131.3M626.4 131.3L627.2 131.1M628.8 131.4L629.6 132.1M629.6 132.1L630.4 133.5M630.4 133.5L631.2 133.8M631.2 133.8L632.0 133.4M636.0 133.5L636.8 133.5M636.8 133.5L637.6 133.1M639.2 132.1L640.1 132.2M640.1 132.2L640.9 132.3M641.7 132.7L642.5 132.5M642.5 132.5L643.3 131.7M643.3 131.7L644.1 131.4M644.1 131.4L644.9 131.4M644.9 131.4L645.7 131.4M649.7 129.3L650.5 128.5M653.7 124.3L654.5 123.9M655.3 122.4L656.1 122.1M659.3 120.2L660.2 120.4M660.2 120.4L661.0 119.9M661.0 119.9L661.8 121.2M664.2 122.0L665.0 122.9M665.8 124.4L666.6 126.3M669.0 129.2L669.8 130.2M669.8 130.2L670.6 131.2M670.6 131.2L671.4 130.7M671.4 130.7L672.2 129.9M672.2 129.9L673.0 129.2M673.0 129.2L673.8 128.3M678.6 142.2L679.4 140.7M679.4 140.7L680.3 139.0M680.3 139.0L681.1 139.5M681.9 140.8L682.7 143.0M685.1 145.4L685.9 146.6M687.5 144.6L688.3 143.3M689.9 139.5L690.7 141.6M690.7 141.6L691.5 144.0M693.1 141.1L693.9 140.4M704.4 128.5L705.2 128.0M707.6 124.2L708.4 123.0M710.8 119.8L711.6 119.8M711.6 119.8L712.4 119.5M714.8 118.0L715.6 118.0M715.6 118.0L716.4 116.9M716.4 116.9L717.2 116.1M718.8 114.7L719.6 113.5M722.1 110.4L722.9 110.2M723.7 110.6L724.5 110.3M729.3 105.5L730.1 103.4M732.5 100.5L733.3 100.0M733.3 100.0L734.1 99.1M734.1 99.1L734.9 97.4M735.7 98.3L736.5 100.0M736.5 100.0L737.3 100.7M743.8 93.4L744.6 92.3M756.6 80.7L757.4 80.4M758.2 80.8L759.0 82.2M759.0 82.2L759.8 82.7M760.7 82.6L761.5 82.6M761.5 82.6L762.3 84.1M762.3 84.1L763.1 82.8M764.7 80.6L765.5 79.6M771.9 69.9L772.7 71.0M773.5 72.0L774.3 72.7M775.1 73.3L775.9 74.4M775.9 74.4L776.7 74.5M783.2 64.7L784.0 63.5M786.4 66.0L787.2 65.1M792.0 59.3L792.8 58.9M792.8 58.9L793.6 58.3M793.6 58.3L794.4 58.6M796.0 57.7L796.8 57.1M796.8 57.1L797.6 57.1M798.4 56.4L799.2 56.1M799.2 56.1L800.0 56.2M802.5 59.5L803.3 60.1M803.3 60.1L804.1 61.6M806.5 62.9L807.3 63.0M808.1 62.9L808.9 63.4M810.5 59.9L811.3 59.9M811.3 59.9L812.1 62.9M812.1 62.9L812.9 65.3M813.7 64.7L814.5 64.1M817.7 61.4L818.5 60.0M821.8 54.0L822.6 53.2M823.4 55.0L824.2 55.7M824.2 55.7L825.0 57.9M825.0 57.9L825.8 56.6M825.8 56.6L826.6 56.5M828.2 55.1L829.0 55.7M829.0 55.7L829.8 55.2M829.8 55.2L830.6 55.5M830.6 55.5L831.4 56.0M833.8 56.3L834.6 56.5M834.6 56.5L835.4 57.7M838.6 59.5L839.4 59.2M841.1 59.5L841.9 58.7M841.9 58.7L842.7 58.8M846.7 55.9L847.5 53.9M849.9 48.5L850.7 48.2M851.5 48.6L852.3 49.2M852.3 49.2L853.1 50.4M853.9 50.9L854.7 50.9M855.5 51.5L856.3 50.8M857.1 51.6L857.9 51.0M857.9 51.0L858.7 51.4M858.7 51.4L859.5 51.6M859.5 51.6L860.3 50.6M862.8 48.4L863.6 47.9M863.6 47.9L864.4 47.6M864.4 47.6L865.2 48.1M865.2 48.1L866.0 47.9M866.0 47.9L866.8 48.0M866.8 48.0L867.6 48.4M868.4 47.6L869.2 47.7M870.0 48.8L870.8 48.8M876.4 54.8L877.2 55.2M877.2 55.2L878.0 56.4M878.8 55.7L879.6 54.8M880.4 55.1L881.3 53.9M882.1 53.2L882.9 52.6M882.9 52.6L883.7 53.7M883.7 53.7L884.5 54.6M885.3 55.1L886.1 55.4M888.5 57.0L889.3 56.7M889.3 56.7L890.1 56.3M890.9 56.4L891.7 56.0M892.5 56.3L893.3 55.8M893.3 55.8L894.1 55.1M894.9 55.6L895.7 54.6M896.5 55.4L897.3 55.6M898.9 55.9L899.7 57.0M899.7 57.0L900.5 56.5M900.5 56.5L901.4 56.8M901.4 56.8L902.2 57.1M903.0 56.0L903.8 55.9M904.6 56.1L905.4 55.8M906.2 55.7L907.0 55.7M907.0 55.7L907.8 54.8M907.8 54.8L908.6 54.8M908.6 54.8L909.4 54.6M909.4 54.6L910.2 54.1M910.2 54.1L911.0 55.1M911.0 55.1L911.8 55.3M912.6 55.6L913.4 55.1M913.4 55.1L914.2 56.4M917.4 57.2L918.2 57.1M918.2 57.1L919.0 56.6M919.0 56.6L919.8 56.5M921.5 55.9L922.3 56.1M922.3 56.1L923.1 55.7M924.7 55.6L925.5 55.7M927.1 57.2L927.9 58.2M931.9 59.6L932.7 60.8M932.7 60.8L933.5 60.0M933.5 60.0L934.3 60.4M934.3 60.4L935.1 60.5M935.1 60.5L935.9 61.1M935.9 61.1L936.7 61.5M936.7 61.5L937.5 61.3M937.5 61.3L938.3 61.0M939.1 61.7L939.9 61.2M942.4 61.8L943.2 61.9M943.2 61.9L944.0 61.5M944.8 61.4L945.6 60.5M948.0 59.8L948.8 58.9M948.8 58.9L949.6 58.9M951.2 58.0L952.0 57.6M952.0 57.6L952.8 57.9M952.8 57.9L953.6 57.0M954.4 57.7L955.2 56.7M956.8 56.2L957.6 56.8M958.4 56.2L959.2 56.2M960.8 56.5L961.7 57.4M961.7 57.4L962.5 57.5M963.3 57.7L964.1 57.9" stroke="#dcd45c" stroke-width="1.2" fill="none" stroke-linecap="round" opacity="0.93"/>
<path d="M29.8 176.7L30.6 176.7M31.4 176.4L32.2 176.6M39.5 176.0L40.3 176.9M45.1 175.0L45.9 174.2M51.5 172.8L52.3 172.9M53.1 172.4L53.9 171.6M59.6 172.3L60.4 172.0M60.4 172.0L61.2 171.0M61.2 171.0L62.0 170.8M65.2 172.9L66.0 172.2M66.8 171.1L67.6 171.5M70.0 173.1L70.8 172.5M72.4 172.0L73.2 172.6M80.5 171.8L81.3 172.1M84.5 171.5L85.3 171.3M87.7 168.4L88.5 167.5M91.7 169.7L92.5 169.9M99.0 167.0L99.8 167.9M101.4 168.2L102.2 168.3M103.8 167.7L104.6 167.2M119.9 164.3L120.7 164.8M124.7 162.7L125.5 163.3M125.5 163.3L126.3 163.5M126.3 163.5L127.1 164.5M127.1 164.5L127.9 164.5M127.9 164.5L128.7 164.5M141.6 163.2L142.4 162.9M146.4 162.7L147.2 162.4M150.4 161.0L151.2 161.0M159.3 160.8L160.1 160.4M164.1 160.5L164.9 160.2M173.7 160.1L174.5 160.8M174.5 160.8L175.3 161.1M176.9 160.8L177.8 161.6M180.2 161.1L181.0 161.1M181.0 161.1L181.8 161.8M185.0 161.7L185.8 161.3M192.2 160.4L193.0 159.7M193.8 160.0L194.6 160.0M199.5 160.1L200.3 160.5M206.7 160.4L207.5 160.0M207.5 160.0L208.3 160.4M209.1 160.7L209.9 160.6M209.9 160.6L210.7 161.4M210.7 161.4L211.5 161.5M212.3 161.6L213.1 162.7M215.5 161.2L216.3 160.5M222.8 159.6L223.6 160.1M223.6 160.1L224.4 159.8M225.2 159.9L226.0 160.1M226.8 160.2L227.6 159.7M228.4 159.9L229.2 159.7M229.2 159.7L230.0 159.7M230.0 159.7L230.8 159.9M234.8 159.8L235.6 160.0M244.5 158.2L245.3 158.7M246.1 158.7L246.9 158.7M249.3 158.1L250.1 157.4M251.7 158.1L252.5 157.2M256.5 158.4L257.3 157.9M257.3 157.9L258.2 158.4M259.0 158.7L259.8 158.8M261.4 159.1L262.2 159.7M263.0 159.1L263.8 159.9M265.4 159.6L266.2 160.2M268.6 160.2L269.4 161.2M272.6 160.2L273.4 159.9M274.2 160.6L275.0 160.0M278.3 161.6L279.1 161.2M279.9 161.3L280.7 162.3M284.7 162.8L285.5 162.6M287.1 163.5L287.9 162.9M291.9 163.6L292.7 163.6M295.1 163.7L295.9 162.2M306.4 159.2L307.2 159.4M307.2 159.4L308.0 159.1M309.6 159.2L310.4 160.0M310.4 160.0L311.2 159.8M316.8 159.6L317.6 159.9M322.5 158.5L323.3 158.0M326.5 156.2L327.3 156.1M327.3 156.1L328.1 155.7M336.1 151.3L336.9 151.4M337.7 150.9L338.6 151.0M341.8 151.5L342.6 151.3M344.2 151.7L345.0 151.8M345.0 151.8L345.8 151.7M345.8 151.7L346.6 152.4M346.6 152.4L347.4 152.8M349.0 153.1L349.8 153.7M350.6 153.4L351.4 154.0M352.2 154.1L353.0 154.8M360.3 153.6L361.1 153.9M361.9 153.4L362.7 153.6M362.7 153.6L363.5 154.8M364.3 154.5L365.1 156.3M365.9 157.3L366.7 157.8M367.5 159.3L368.3 159.7M371.5 160.2L372.3 160.9M372.3 160.9L373.1 161.2M373.1 161.2L373.9 161.9M376.3 162.5L377.1 163.1M377.1 163.1L377.9 163.2M377.9 163.2L378.8 163.5M380.4 163.3L381.2 163.7M381.2 163.7L382.0 164.2M384.4 165.2L385.2 165.6M387.6 166.2L388.4 165.7M388.4 165.7L389.2 166.6M393.2 165.8L394.0 166.5M394.0 166.5L394.8 166.0M395.6 165.9L396.4 166.3M396.4 166.3L397.2 167.0M397.2 167.0L398.0 166.5M402.1 166.7L402.9 166.1M405.3 163.8L406.1 162.7M407.7 162.1L408.5 162.3M414.1 160.7L414.9 160.0M416.5 158.4L417.3 157.6M417.3 157.6L418.1 158.1M419.8 160.0L420.6 160.0M420.6 160.0L421.4 160.6M431.8 156.3L432.6 156.2M435.0 153.7L435.8 153.4M440.7 148.1L441.5 147.9M441.5 147.9L442.3 147.2M444.7 147.0L445.5 147.0M446.3 147.6L447.1 146.8M447.1 146.8L447.9 147.6M447.9 147.6L448.7 147.8M448.7 147.8L449.5 147.0M455.1 149.1L455.9 148.5M456.7 148.0L457.5 147.9M457.5 147.9L458.3 147.6M461.6 146.3L462.4 146.6M464.8 146.3L465.6 146.1M468.8 147.2L469.6 147.1M469.6 147.1L470.4 147.3M473.6 145.4L474.4 145.9M474.4 145.9L475.2 145.0M475.2 145.0L476.0 143.9M476.8 142.3L477.6 140.4M479.3 138.2L480.1 135.9M481.7 136.1L482.5 137.2M482.5 137.2L483.3 138.1M485.7 138.9L486.5 138.9M496.9 133.7L497.7 134.0M498.5 134.6L499.4 134.7M499.4 134.7L500.2 135.2M500.2 135.2L501.0 135.1M503.4 135.3L504.2 134.4M504.2 134.4L505.0 133.5M507.4 130.7L508.2 130.2M514.6 129.8L515.4 129.7M518.6 130.2L519.5 130.2M522.7 130.1L523.5 129.5M524.3 129.6L525.1 128.9M534.7 129.6L535.5 130.0M535.5 130.0L536.3 130.7M537.1 131.0L537.9 131.6M537.9 131.6L538.7 131.6M539.6 133.0L540.4 132.7M544.4 131.6L545.2 131.2M547.6 128.2L548.4 127.9M550.8 129.3L551.6 130.5M552.4 130.6L553.2 131.0M560.5 133.2L561.3 133.3M569.3 132.5L570.1 132.3M575.7 130.5L576.5 129.8M583.8 130.7L584.6 131.2M584.6 131.2L585.4 131.8M585.4 131.8L586.2 132.5M587.0 131.9L587.8 132.5M588.6 132.6L589.4 133.8M590.2 133.2L591.0 133.4M591.0 133.4L591.8 133.7M595.8 134.5L596.6 134.4M599.9 134.7L600.7 134.2M617.5 131.6L618.3 131.1M620.0 129.3L620.8 129.0M621.6 128.7L622.4 129.2M622.4 129.2L623.2 130.5M624.8 132.7L625.6 132.9M627.2 131.1L628.0 131.4M628.0 131.4L628.8 131.4M632.0 133.4L632.8 133.8M632.8 133.8L633.6 133.3M633.6 133.3L634.4 133.1M635.2 132.7L636.0 133.5M637.6 133.1L638.4 133.3M638.4 133.3L639.2 132.1M647.3 130.2L648.1 130.4M648.1 130.4L648.9 129.7M648.9 129.7L649.7 129.3M650.5 128.5L651.3 127.4M651.3 127.4L652.1 126.1M652.1 126.1L652.9 125.2M657.7 121.3L658.5 120.7M662.6 121.6L663.4 122.3M663.4 122.3L664.2 122.0M665.0 122.9L665.8 124.4M667.4 128.0L668.2 128.6M668.2 128.6L669.0 129.2M673.8 128.3L674.6 128.9M674.6 128.9L675.4 131.0M675.4 131.0L676.2 131.6M676.2 131.6L677.0 133.3M677.0 133.3L677.8 137.4M681.1 139.5L681.9 140.8M682.7 143.0L683.5 144.1M683.5 144.1L684.3 144.7M691.5 144.0L692.3 142.7M696.3 143.1L697.1 141.2M697.9 140.0L698.7 137.6M700.4 135.4L701.2 135.0M706.8 125.9L707.6 124.2M712.4 119.5L713.2 118.6M713.2 118.6L714.0 118.0M718.0 115.0L718.8 114.7M719.6 113.5L720.5 112.0M721.3 111.1L722.1 110.4M722.9 110.2L723.7 110.6M725.3 110.7L726.1 110.9M727.7 107.6L728.5 106.2M728.5 106.2L729.3 105.5M745.4 92.0L746.2 91.3M747.0 90.7L747.8 88.9M747.8 88.9L748.6 88.6M748.6 88.6L749.4 87.5M751.0 86.6L751.8 86.4M755.0 82.3L755.8 81.1M755.8 81.1L756.6 80.7M757.4 80.4L758.2 80.8M763.9 82.1L764.7 80.6M771.1 69.4L771.9 69.9M772.7 71.0L773.5 72.0M774.3 72.7L775.1 73.3M776.7 74.5L777.5 73.5M779.1 70.7L779.9 69.7M779.9 69.7L780.8 67.7M782.4 65.4L783.2 64.7M784.0 63.5L784.8 64.0M784.8 64.0L785.6 64.9M785.6 64.9L786.4 66.0M794.4 58.6L795.2 58.3M797.6 57.1L798.4 56.4M800.0 56.2L800.9 56.9M800.9 56.9L801.7 58.4M804.1 61.6L804.9 61.4M804.9 61.4L805.7 62.5M808.9 63.4L809.7 61.3M812.9 65.3L813.7 64.7M816.9 61.7L817.7 61.4M818.5 60.0L819.3 57.9M826.6 56.5L827.4 55.1M831.4 56.0L832.2 56.0M833.0 55.9L833.8 56.3M835.4 57.7L836.2 57.9M836.2 57.9L837.0 58.7M837.0 58.7L837.8 58.3M837.8 58.3L838.6 59.5M839.4 59.2L840.2 59.9M842.7 58.8L843.5 58.0M844.3 57.5L845.1 57.4M849.1 50.7L849.9 48.5M853.1 50.4L853.9 50.9M854.7 50.9L855.5 51.5M862.0 49.3L862.8 48.4M867.6 48.4L868.4 47.6M869.2 47.7L870.0 48.8M870.8 48.8L871.6 49.5M871.6 49.5L872.4 50.6M873.2 51.0L874.0 52.1M874.0 52.1L874.8 52.8M879.6 54.8L880.4 55.1M881.3 53.9L882.1 53.2M884.5 54.6L885.3 55.1M886.1 55.4L886.9 55.8M886.9 55.8L887.7 56.2M891.7 56.0L892.5 56.3M895.7 54.6L896.5 55.4M902.2 57.1L903.0 56.0M911.8 55.3L912.6 55.6M914.2 56.4L915.0 56.6M915.0 56.6L915.8 56.6M915.8 56.6L916.6 57.2M916.6 57.2L917.4 57.2M923.9 55.5L924.7 55.6M926.3 56.7L927.1 57.2M927.9 58.2L928.7 58.4M928.7 58.4L929.5 58.5M930.3 59.3L931.1 60.1M931.1 60.1L931.9 59.6M939.9 61.2L940.7 61.2M955.2 56.7L956.0 56.3M959.2 56.2L960.0 56.2M960.0 56.2L960.8 56.5M962.5 57.5L963.3 57.7M964.1 57.9L964.9 57.2M965.7 57.9L966.5 57.8" stroke="#0a70e4" stroke-width="1.2" fill="none" stroke-linecap="round" opacity="0.93"/>
<path d="M26.6 178.7L27.4 177.4M28.2 177.6L29.0 176.6M32.2 176.6L33.0 176.0M35.4 177.8L36.2 176.9M37.1 176.2L37.9 175.8M41.1 177.1L41.9 176.1M43.5 175.6L44.3 175.5M44.3 175.5L45.1 175.0M48.3 173.9L49.1 174.5M52.3 172.9L53.1 172.4M55.5 170.8L56.3 171.0M58.0 171.5L58.8 172.0M62.0 170.8L62.8 171.1M75.6 171.6L76.4 172.0M76.4 172.0L77.3 170.9M77.3 170.9L78.1 171.2M81.3 172.1L82.1 171.6M82.1 171.6L82.9 171.5M83.7 171.2L84.5 171.5M85.3 171.3L86.1 170.1M90.9 169.1L91.7 169.7M99.8 167.9L100.6 167.9M104.6 167.2L105.4 167.5M105.4 167.5L106.2 166.6M107.8 166.2L108.6 165.9M112.6 164.7L113.4 164.8M113.4 164.8L114.2 164.4M115.0 165.3L115.8 165.0M117.5 164.6L118.3 164.6M119.1 164.6L119.9 164.3M121.5 164.5L122.3 163.4M122.3 163.4L123.1 163.0M128.7 164.5L129.5 165.6M129.5 165.6L130.3 165.1M131.9 165.2L132.7 164.6M134.3 165.8L135.1 165.6M135.1 165.6L135.9 165.2M135.9 165.2L136.7 164.5M139.2 164.3L140.0 163.8M140.8 163.9L141.6 163.2M143.2 163.4L144.0 163.4M144.0 163.4L144.8 163.1M148.0 161.6L148.8 161.8M149.6 161.4L150.4 161.0M152.8 161.3L153.6 161.8M153.6 161.8L154.4 162.1M154.4 162.1L155.2 161.6M156.0 162.2L156.8 162.3M156.8 162.3L157.7 162.2M160.9 160.0L161.7 159.6M162.5 160.0L163.3 160.4M170.5 160.6L171.3 160.1M181.8 161.8L182.6 161.7M183.4 160.9L184.2 161.6M186.6 160.9L187.4 161.1M187.4 161.1L188.2 160.5M188.2 160.5L189.0 160.2M190.6 160.5L191.4 160.2M204.3 161.2L205.1 161.6M205.1 161.6L205.9 160.5M213.1 162.7L213.9 161.6M216.3 160.5L217.1 159.8M220.4 159.5L221.2 160.0M226.0 160.1L226.8 160.2M227.6 159.7L228.4 159.9M231.6 159.6L232.4 159.7M233.2 159.6L234.0 160.1M235.6 160.0L236.4 160.1M247.7 157.8L248.5 158.3M248.5 158.3L249.3 158.1M253.3 157.8L254.1 157.2M254.1 157.2L254.9 157.5M255.7 158.3L256.5 158.4M263.8 159.9L264.6 159.9M271.8 160.0L272.6 160.2M279.1 161.2L279.9 161.3M283.1 161.8L283.9 162.0M283.9 162.0L284.7 162.8M286.3 162.4L287.1 163.5M287.9 162.9L288.7 162.9M292.7 163.6L293.5 163.8M293.5 163.8L294.3 164.0M294.3 164.0L295.1 163.7M299.2 159.7L300.0 159.5M300.0 159.5L300.8 159.1M301.6 159.1L302.4 159.1M303.2 159.1L304.0 159.7M308.0 159.1L308.8 159.4M311.2 159.8L312.0 159.4M316.0 159.5L316.8 159.6M318.5 159.4L319.3 159.4M320.9 159.3L321.7 158.3M321.7 158.3L322.5 158.5M328.1 155.7L328.9 155.7M328.9 155.7L329.7 154.4M329.7 154.4L330.5 153.6M331.3 152.9L332.1 153.3M332.1 153.3L332.9 152.9M334.5 151.7L335.3 151.4M340.2 151.7L341.0 151.8M348.2 153.1L349.0 153.1M353.0 154.8L353.8 154.7M355.4 154.3L356.2 153.8M356.2 153.8L357.0 153.8M358.7 153.6L359.5 153.5M366.7 157.8L367.5 159.3M373.9 161.9L374.7 162.2M379.6 163.2L380.4 163.3M382.0 164.2L382.8 164.2M386.0 165.9L386.8 166.2M386.8 166.2L387.6 166.2M392.4 166.4L393.2 165.8M398.0 166.5L398.9 167.3M399.7 167.7L400.5 167.3M400.5 167.3L401.3 167.4M402.9 166.1L403.7 165.4M403.7 165.4L404.5 164.4M404.5 164.4L405.3 163.8M406.1 162.7L406.9 162.4M406.9 162.4L407.7 162.1M409.3 161.4L410.1 161.4M410.1 161.4L410.9 161.0M412.5 161.7L413.3 161.4M414.9 160.0L415.7 158.9M419.0 158.4L419.8 160.0M423.0 158.3L423.8 158.2M426.2 157.3L427.0 157.5M427.8 157.9L428.6 159.2M430.2 157.7L431.0 156.5M431.0 156.5L431.8 156.3M432.6 156.2L433.4 154.6M433.4 154.6L434.2 154.7M435.8 153.4L436.6 152.5M437.4 151.3L438.2 151.3M438.2 151.3L439.1 150.1M439.1 150.1L439.9 148.9M439.9 148.9L440.7 148.1M443.1 146.8L443.9 146.7M454.3 148.6L455.1 149.1M459.2 147.2L460.0 147.1M463.2 145.8L464.0 145.9M464.0 145.9L464.8 146.3M465.6 146.1L466.4 146.4M472.0 146.4L472.8 146.4M472.8 146.4L473.6 145.4M476.0 143.9L476.8 142.3M484.9 138.2L485.7 138.9M488.9 138.2L489.7 137.7M489.7 137.7L490.5 137.2M490.5 137.2L491.3 137.4M491.3 137.4L492.1 136.5M492.1 136.5L492.9 135.6M494.5 135.4L495.3 134.3M502.6 135.6L503.4 135.3M505.8 132.7L506.6 131.6M506.6 131.6L507.4 130.7M509.0 130.4L509.8 131.0M512.2 130.4L513.0 130.6M513.0 130.6L513.8 129.8M525.9 128.9L526.7 129.0M526.7 129.0L527.5 128.5M532.3 128.3L533.1 128.8M533.1 128.8L533.9 129.5M533.9 129.5L534.7 129.6M536.3 130.7L537.1 131.0M541.2 133.3L542.0 132.9M542.8 132.4L543.6 132.1M543.6 132.1L544.4 131.6M545.2 131.2L546.0 130.5M546.0 130.5L546.8 129.0M549.2 128.0L550.0 128.6M551.6 130.5L552.4 130.6M555.6 131.4L556.4 131.7M561.3 133.3L562.1 133.4M563.7 134.5L564.5 134.0M565.3 133.6L566.1 133.8M566.9 133.9L567.7 132.9M568.5 132.4L569.3 132.5M570.1 132.3L570.9 132.1M570.9 132.1L571.7 131.0M571.7 131.0L572.5 131.1M573.3 130.5L574.1 130.0M578.9 129.7L579.8 130.3M602.3 135.2L603.1 135.4M604.7 135.8L605.5 135.5M605.5 135.5L606.3 135.4M607.1 135.0L607.9 135.3M608.7 134.0L609.5 134.5M609.5 134.5L610.3 133.4M615.9 132.2L616.7 132.6M618.3 131.1L619.1 131.0M619.1 131.0L620.0 129.3M634.4 133.1L635.2 132.7M640.9 132.3L641.7 132.7M645.7 131.4L646.5 131.6M646.5 131.6L647.3 130.2M652.9 125.2L653.7 124.3M654.5 123.9L655.3 122.4M656.1 122.1L656.9 122.3M656.9 122.3L657.7 121.3M658.5 120.7L659.3 120.2M661.8 121.2L662.6 121.6M666.6 126.3L667.4 128.0M677.8 137.4L678.6 142.2M684.3 144.7L685.1 145.4M685.9 146.6L686.7 146.7M686.7 146.7L687.5 144.6M688.3 143.3L689.1 141.1M689.1 141.1L689.9 139.5M692.3 142.7L693.1 141.1M693.9 140.4L694.7 141.7M694.7 141.7L695.5 144.2M695.5 144.2L696.3 143.1M697.1 141.2L697.9 140.0M698.7 137.6L699.5 137.0M699.5 137.0L700.4 135.4M701.2 135.0L702.0 131.1M702.0 131.1L702.8 127.1M702.8 127.1L703.6 127.3M703.6 127.3L704.4 128.5M705.2 128.0L706.0 127.2M706.0 127.2L706.8 125.9M708.4 123.0L709.2 121.4M709.2 121.4L710.0 120.2M710.0 120.2L710.8 119.8M714.0 118.0L714.8 118.0M717.2 116.1L718.0 115.0M720.5 112.0L721.3 111.1M724.5 110.3L725.3 110.7M726.1 110.9L726.9 109.1M726.9 109.1L727.7 107.6M730.1 103.4L730.9 102.7M730.9 102.7L731.7 101.5M731.7 101.5L732.5 100.5M734.9 97.4L735.7 98.3M737.3 100.7L738.1 101.3M738.1 101.3L738.9 101.1M738.9 101.1L739.7 99.4M739.7 99.4L740.6 98.7M740.6 98.7L741.4 97.1M741.4 97.1L742.2 96.5M742.2 96.5L743.0 94.8M743.0 94.8L743.8 93.4M744.6 92.3L745.4 92.0M746.2 91.3L747.0 90.7M749.4 87.5L750.2 87.3M750.2 87.3L751.0 86.6M751.8 86.4L752.6 86.4M752.6 86.4L753.4 85.9M753.4 85.9L754.2 83.5M754.2 83.5L755.0 82.3M759.8 82.7L760.7 82.6M763.1 82.8L763.9 82.1M765.5 79.6L766.3 77.7M766.3 77.7L767.1 77.2M767.1 77.2L767.9 75.2M767.9 75.2L768.7 74.0M768.7 74.0L769.5 73.0M769.5 73.0L770.3 71.6M770.3 71.6L771.1 69.4M777.5 73.5L778.3 71.4M778.3 71.4L779.1 70.7M780.8 67.7L781.6 67.4M781.6 67.4L782.4 65.4M787.2 65.1L788.0 63.8M788.0 63.8L788.8 63.0M788.8 63.0L789.6 61.7M789.6 61.7L790.4 60.6M790.4 60.6L791.2 59.0M791.2 59.0L792.0 59.3M795.2 58.3L796.0 57.7M801.7 58.4L802.5 59.5M805.7 62.5L806.5 62.9M807.3 63.0L808.1 62.9M809.7 61.3L810.5 59.9M814.5 64.1L815.3 62.7M815.3 62.7L816.1 62.9M816.1 62.9L816.9 61.7M819.3 57.9L820.1 57.3M820.1 57.3L821.0 56.2M821.0 56.2L821.8 54.0M822.6 53.2L823.4 55.0M827.4 55.1L828.2 55.1M832.2 56.0L833.0 55.9M840.2 59.9L841.1 59.5M843.5 58.0L844.3 57.5M845.1 57.4L845.9 56.0M845.9 56.0L846.7 55.9M847.5 53.9L848.3 51.9M848.3 51.9L849.1 50.7M850.7 48.2L851.5 48.6M856.3 50.8L857.1 51.6M860.3 50.6L861.2 50.2M861.2 50.2L862.0 49.3M872.4 50.6L873.2 51.0M874.8 52.8L875.6 54.0M875.6 54.0L876.4 54.8M878.0 56.4L878.8 55.7M887.7 56.2L888.5 57.0M890.1 56.3L890.9 56.4M894.1 55.1L894.9 55.6M897.3 55.6L898.1 55.8M898.1 55.8L898.9 55.9M903.8 55.9L904.6 56.1M905.4 55.8L906.2 55.7M919.8 56.5L920.6 55.9M920.6 55.9L921.5 55.9M923.1 55.7L923.9 55.5M925.5 55.7L926.3 56.7M929.5 58.5L930.3 59.3M938.3 61.0L939.1 61.7M940.7 61.2L941.6 62.0M941.6 62.0L942.4 61.8M944.0 61.5L944.8 61.4M945.6 60.5L946.4 60.5M946.4 60.5L947.2 60.0M947.2 60.0L948.0 59.8M949.6 58.9L950.4 58.5M950.4 58.5L951.2 58.0M953.6 57.0L954.4 57.7M956.0 56.3L956.8 56.2M957.6 56.8L958.4 56.2M964.9 57.2L965.7 57.9" stroke="#e00808" stroke-width="1.2" fill="none" stroke-linecap="round" opacity="0.93"/>
<path d="M6.9 303.4h1.2v1.0h-1.2zM11.7 303.4h1.2v1.0h-1.2zM16.5 303.4h1.2v1.0h-1.2zM21.4 303.4h1.2v1.0h-1.2zM26.2 303.3h1.2v1.1h-1.2zM28.6 298.5h1.2v1.1h-1.2zM29.4 298.5h1.2v1.1h-1.2zM31.8 293.7h1.2v1.1h-1.2zM35.8 291.3h1.2v1.1h-1.2zM39.1 288.9h1.2v1.1h-1.2zM40.7 288.9h1.2v1.1h-1.2zM40.7 286.6h1.2v3.5h-1.2zM41.5 288.9h1.2v1.1h-1.2zM43.9 291.3h1.2v1.1h-1.2zM46.3 296.1h1.2v1.1h-1.2zM51.1 291.4h1.2v1.1h-1.2zM51.9 291.4h1.2v1.1h-1.2zM54.3 284.2h1.2v1.1h-1.2zM55.9 279.4h1.2v1.1h-1.2zM59.2 281.8h1.2v1.1h-1.2zM61.6 281.8h1.2v1.1h-1.2zM63.2 281.8h1.2v1.1h-1.2zM63.2 281.8h1.2v3.5h-1.2zM64.0 281.8h1.2v1.1h-1.2zM68.0 281.8h1.2v1.1h-1.2zM68.8 281.8h1.2v1.1h-1.2zM69.6 281.8h1.2v1.1h-1.2zM69.6 279.4h1.2v3.5h-1.2zM70.4 281.8h1.2v1.1h-1.2zM71.2 281.8h1.2v1.1h-1.2zM76.8 276.9h1.2v1.1h-1.2zM78.5 276.9h1.2v1.1h-1.2zM80.9 276.9h1.2v1.1h-1.2zM82.5 276.9h1.2v1.1h-1.2zM84.9 276.9h1.2v1.1h-1.2zM86.5 276.9h1.2v1.1h-1.2zM88.9 276.9h1.2v1.1h-1.2zM89.7 276.9h1.2v1.1h-1.2zM89.7 276.9h1.2v3.5h-1.2zM90.5 276.9h1.2v1.1h-1.2zM92.1 276.9h1.2v1.1h-1.2zM92.1 276.9h1.2v3.5h-1.2zM92.9 276.9h1.2v1.1h-1.2zM93.7 276.9h1.2v1.1h-1.2zM94.5 276.9h1.2v1.1h-1.2zM96.1 276.9h1.2v1.1h-1.2zM96.9 276.9h1.2v1.1h-1.2zM96.9 274.6h1.2v3.5h-1.2zM97.8 276.9h1.2v1.1h-1.2zM97.8 276.9h1.2v3.5h-1.2zM99.4 276.9h1.2v1.1h-1.2zM101.0 276.9h1.2v1.1h-1.2zM101.8 276.9h1.2v1.1h-1.2zM108.2 272.1h1.2v1.1h-1.2zM110.6 274.5h1.2v1.1h-1.2zM112.2 274.5h1.2v1.1h-1.2zM118.7 272.1h1.2v1.1h-1.2zM120.3 272.1h1.2v1.1h-1.2zM121.9 272.1h1.2v1.1h-1.2zM124.3 272.1h1.2v1.1h-1.2zM125.1 272.1h1.2v1.1h-1.2zM125.9 272.1h1.2v1.1h-1.2zM129.9 272.1h1.2v1.1h-1.2zM136.3 267.3h1.2v1.1h-1.2zM137.1 267.3h1.2v1.1h-1.2zM137.1 267.3h1.2v3.5h-1.2zM138.8 267.3h1.2v1.1h-1.2zM139.6 267.3h1.2v1.1h-1.2zM141.2 267.3h1.2v1.1h-1.2zM147.6 269.7h1.2v1.1h-1.2zM151.6 267.3h1.2v1.1h-1.2zM153.2 264.9h1.2v1.1h-1.2zM153.2 262.6h1.2v3.5h-1.2zM154.0 264.9h1.2v1.1h-1.2zM162.1 260.1h1.2v1.1h-1.2zM163.7 260.1h1.2v1.1h-1.2zM164.5 260.1h1.2v1.1h-1.2zM165.3 260.1h1.2v1.1h-1.2zM166.1 260.1h1.2v1.1h-1.2zM167.7 260.1h1.2v1.1h-1.2zM169.3 260.1h1.2v1.1h-1.2zM170.1 260.1h1.2v1.1h-1.2zM170.9 260.1h1.2v1.1h-1.2zM171.7 260.1h1.2v1.1h-1.2zM172.5 260.1h1.2v1.1h-1.2zM173.3 260.1h1.2v1.1h-1.2zM174.1 260.1h1.2v1.1h-1.2zM174.9 260.1h1.2v1.1h-1.2zM175.7 260.1h1.2v1.1h-1.2zM175.7 260.1h1.2v3.5h-1.2zM177.3 260.1h1.2v1.1h-1.2zM177.3 257.8h1.2v3.5h-1.2zM179.0 260.1h1.2v1.1h-1.2zM185.4 257.7h1.2v1.1h-1.2zM190.2 252.9h1.2v1.1h-1.2zM191.0 252.9h1.2v1.1h-1.2zM193.4 255.3h1.2v1.1h-1.2zM193.4 252.9h1.2v3.5h-1.2zM195.8 255.3h1.2v1.1h-1.2zM195.8 252.9h1.2v3.5h-1.2zM200.7 260.1h1.2v1.1h-1.2zM201.5 260.1h1.2v1.1h-1.2zM201.5 260.1h1.2v3.5h-1.2zM204.7 260.1h1.2v1.1h-1.2zM206.3 260.1h1.2v1.1h-1.2zM207.9 260.1h1.2v1.1h-1.2zM210.3 260.1h1.2v1.1h-1.2zM211.9 260.1h1.2v1.1h-1.2zM212.7 260.1h1.2v1.1h-1.2zM213.5 260.1h1.2v1.1h-1.2zM215.1 260.1h1.2v1.1h-1.2zM216.7 260.1h1.2v1.1h-1.2zM216.7 257.7h1.2v3.5h-1.2zM219.2 255.3h1.2v1.1h-1.2zM219.2 255.3h1.2v3.5h-1.2zM221.6 255.3h1.2v1.1h-1.2zM222.4 255.3h1.2v1.1h-1.2zM224.0 255.3h1.2v1.1h-1.2zM225.6 257.7h1.2v1.1h-1.2zM227.2 260.1h1.2v1.1h-1.2zM228.0 260.1h1.2v1.1h-1.2zM228.8 260.1h1.2v1.1h-1.2zM233.6 260.1h1.2v1.1h-1.2zM234.4 260.1h1.2v1.1h-1.2zM238.5 262.5h1.2v1.1h-1.2zM241.7 262.5h1.2v1.1h-1.2zM242.5 262.5h1.2v1.1h-1.2zM242.5 262.5h1.2v3.5h-1.2zM248.9 257.7h1.2v1.1h-1.2zM248.9 255.3h1.2v3.5h-1.2zM250.5 257.7h1.2v1.1h-1.2zM253.7 257.7h1.2v1.1h-1.2zM254.5 257.7h1.2v1.1h-1.2zM256.9 257.7h1.2v1.1h-1.2zM261.8 260.1h1.2v1.1h-1.2zM265.0 262.5h1.2v1.1h-1.2zM266.6 267.3h1.2v1.1h-1.2zM268.2 267.3h1.2v1.1h-1.2zM268.2 267.3h1.2v3.5h-1.2zM270.6 264.9h1.2v1.1h-1.2zM271.4 264.9h1.2v1.1h-1.2zM273.0 264.9h1.2v1.1h-1.2zM277.0 264.9h1.2v1.1h-1.2zM289.9 269.7h1.2v1.1h-1.2zM297.1 267.3h1.2v1.1h-1.2zM297.9 267.3h1.2v1.1h-1.2zM300.4 267.3h1.2v1.1h-1.2zM301.2 267.3h1.2v1.1h-1.2zM302.8 267.3h1.2v1.1h-1.2zM306.0 269.7h1.2v1.1h-1.2zM314.0 276.9h1.2v1.1h-1.2zM314.0 274.5h1.2v3.5h-1.2zM314.8 276.9h1.2v1.1h-1.2zM316.4 276.9h1.2v1.1h-1.2zM317.2 276.9h1.2v1.1h-1.2zM318.0 276.9h1.2v1.1h-1.2zM324.5 274.5h1.2v1.1h-1.2zM330.1 267.3h1.2v1.1h-1.2zM338.1 276.9h1.2v1.1h-1.2zM339.0 276.9h1.2v1.1h-1.2zM342.2 276.9h1.2v1.1h-1.2zM342.2 276.9h1.2v3.5h-1.2zM344.6 281.7h1.2v1.1h-1.2zM344.6 281.7h1.2v3.5h-1.2zM346.2 281.7h1.2v1.1h-1.2zM346.2 281.7h1.2v3.5h-1.2zM352.6 305.7h1.2v1.1h-1.2zM358.2 317.7h1.2v1.1h-1.2zM360.7 324.9h1.2v1.1h-1.2zM361.5 324.9h1.2v1.1h-1.2zM362.3 324.9h1.2v1.1h-1.2zM364.7 324.9h1.2v1.1h-1.2zM365.5 324.9h1.2v1.1h-1.2zM366.3 324.9h1.2v1.1h-1.2zM367.1 324.9h1.2v1.1h-1.2zM368.7 324.9h1.2v1.1h-1.2zM370.3 324.9h1.2v1.1h-1.2zM372.7 329.7h1.2v1.1h-1.2zM373.5 329.7h1.2v1.1h-1.2zM375.1 329.7h1.2v1.1h-1.2zM375.9 329.7h1.2v1.1h-1.2zM380.0 334.5h1.2v1.1h-1.2zM385.6 336.9h1.2v1.1h-1.2zM386.4 336.9h1.2v1.1h-1.2zM387.2 336.9h1.2v1.1h-1.2zM388.0 336.9h1.2v1.1h-1.2zM388.8 336.9h1.2v1.1h-1.2zM390.4 336.9h1.2v1.1h-1.2zM390.4 336.9h1.2v3.5h-1.2zM392.0 336.9h1.2v1.1h-1.2zM392.0 334.5h1.2v3.5h-1.2zM393.6 336.9h1.2v1.1h-1.2zM396.0 336.9h1.2v1.1h-1.2zM397.6 336.9h1.2v1.1h-1.2zM397.6 336.9h1.2v3.5h-1.2zM398.4 336.9h1.2v1.1h-1.2zM400.1 341.7h1.2v1.1h-1.2zM400.1 339.3h1.2v3.5h-1.2zM400.9 341.7h1.2v1.1h-1.2zM402.5 341.7h1.2v1.1h-1.2zM405.7 336.9h1.2v1.1h-1.2zM405.7 334.5h1.2v3.5h-1.2zM407.3 334.5h1.2v1.1h-1.2zM408.9 329.7h1.2v1.1h-1.2zM411.3 329.7h1.2v1.1h-1.2zM412.1 329.7h1.2v1.1h-1.2zM413.7 327.3h1.2v1.1h-1.2zM414.5 327.3h1.2v1.1h-1.2zM415.3 327.3h1.2v1.1h-1.2zM416.1 327.3h1.2v1.1h-1.2zM417.7 329.7h1.2v1.1h-1.2zM421.0 327.3h1.2v1.1h-1.2zM421.0 324.9h1.2v3.5h-1.2zM421.8 327.3h1.2v1.1h-1.2zM422.6 327.3h1.2v1.1h-1.2zM423.4 327.3h1.2v1.1h-1.2zM424.2 327.3h1.2v1.1h-1.2zM425.8 327.3h1.2v1.1h-1.2zM426.6 327.3h1.2v1.1h-1.2zM426.6 324.9h1.2v3.5h-1.2zM428.2 327.3h1.2v1.1h-1.2zM428.2 324.9h1.2v3.5h-1.2zM429.8 329.7h1.2v1.1h-1.2zM430.6 329.7h1.2v1.1h-1.2zM431.4 329.7h1.2v1.1h-1.2zM432.2 329.7h1.2v1.1h-1.2zM439.5 320.1h1.2v1.1h-1.2zM440.3 320.1h1.2v1.1h-1.2zM445.9 315.3h1.2v1.1h-1.2zM446.7 315.3h1.2v1.1h-1.2zM451.5 324.9h1.2v1.1h-1.2zM451.5 322.5h1.2v3.5h-1.2zM452.3 324.9h1.2v1.1h-1.2zM455.5 322.5h1.2v1.1h-1.2zM455.5 322.5h1.2v3.5h-1.2zM458.7 317.7h1.2v1.1h-1.2zM459.6 317.7h1.2v1.1h-1.2zM463.6 324.9h1.2v1.1h-1.2zM464.4 324.9h1.2v1.1h-1.2zM470.0 332.1h1.2v1.1h-1.2zM470.8 332.1h1.2v1.1h-1.2zM474.8 339.3h1.2v1.1h-1.2zM476.4 339.3h1.2v1.1h-1.2zM479.7 334.5h1.2v1.1h-1.2zM480.5 334.5h1.2v1.1h-1.2zM482.1 334.5h1.2v1.1h-1.2zM484.5 336.9h1.2v1.1h-1.2zM486.1 332.1h1.2v1.1h-1.2zM487.7 332.1h1.2v1.1h-1.2zM487.7 332.1h1.2v3.5h-1.2zM488.5 332.1h1.2v1.1h-1.2zM488.5 332.1h1.2v3.5h-1.2zM489.3 332.1h1.2v1.1h-1.2zM490.1 332.1h1.2v1.1h-1.2zM491.7 336.9h1.2v1.1h-1.2zM491.7 336.9h1.2v3.5h-1.2zM492.5 336.9h1.2v1.1h-1.2zM493.3 336.9h1.2v1.1h-1.2zM494.1 336.9h1.2v1.1h-1.2zM495.7 336.9h1.2v1.1h-1.2zM498.1 332.1h1.2v1.1h-1.2zM498.9 332.1h1.2v1.1h-1.2zM498.9 332.1h1.2v3.5h-1.2zM499.8 332.1h1.2v1.1h-1.2zM503.0 336.9h1.2v1.1h-1.2zM506.2 332.1h1.2v1.1h-1.2zM506.2 332.1h1.2v3.5h-1.2zM510.2 322.5h1.2v1.1h-1.2zM511.0 322.5h1.2v1.1h-1.2zM513.4 322.5h1.2v1.1h-1.2zM513.4 322.5h1.2v3.5h-1.2zM518.2 324.9h1.2v1.1h-1.2zM518.2 324.9h1.2v3.5h-1.2zM519.9 322.5h1.2v1.1h-1.2zM520.7 322.5h1.2v1.1h-1.2zM523.1 317.7h1.2v1.1h-1.2zM523.9 317.7h1.2v1.1h-1.2zM524.7 317.7h1.2v1.1h-1.2zM525.5 317.7h1.2v1.1h-1.2zM526.3 317.7h1.2v1.1h-1.2zM526.3 317.7h1.2v3.5h-1.2zM528.7 312.9h1.2v1.1h-1.2zM530.3 312.9h1.2v1.1h-1.2zM531.9 317.7h1.2v1.1h-1.2zM532.7 317.7h1.2v1.1h-1.2zM542.4 315.3h1.2v1.1h-1.2zM543.2 315.3h1.2v1.1h-1.2zM549.6 312.9h1.2v1.1h-1.2zM550.4 312.9h1.2v1.1h-1.2zM552.8 315.3h1.2v1.1h-1.2zM562.5 315.3h1.2v1.1h-1.2zM562.5 315.3h1.2v3.5h-1.2zM563.3 315.3h1.2v1.1h-1.2zM564.1 315.3h1.2v1.1h-1.2zM564.9 315.3h1.2v1.1h-1.2zM567.3 310.5h1.2v1.1h-1.2zM567.3 308.1h1.2v3.5h-1.2zM572.9 291.3h1.2v1.1h-1.2zM572.9 291.3h1.2v3.5h-1.2zM574.5 293.7h1.2v1.1h-1.2zM574.5 293.7h1.2v3.5h-1.2zM575.3 293.7h1.2v1.1h-1.2zM576.1 293.7h1.2v1.1h-1.2zM577.7 293.7h1.2v1.1h-1.2zM578.5 293.7h1.2v1.1h-1.2zM579.3 293.7h1.2v1.1h-1.2zM580.2 293.7h1.2v1.1h-1.2zM586.6 298.5h1.2v1.1h-1.2zM586.6 296.1h1.2v3.5h-1.2zM591.4 308.1h1.2v1.1h-1.2zM592.2 308.1h1.2v1.1h-1.2zM592.2 305.7h1.2v3.5h-1.2zM593.8 312.9h1.2v1.1h-1.2zM605.9 332.1h1.2v1.1h-1.2zM609.9 336.9h1.2v1.1h-1.2zM610.7 336.9h1.2v1.1h-1.2zM615.5 336.9h1.2v1.1h-1.2zM620.4 341.7h1.2v1.1h-1.2zM620.4 341.7h1.2v3.5h-1.2zM621.2 341.7h1.2v1.1h-1.2zM623.6 341.7h1.2v1.1h-1.2zM624.4 341.7h1.2v1.1h-1.2zM625.2 341.7h1.2v1.1h-1.2zM629.2 348.9h1.2v1.1h-1.2zM630.0 348.9h1.2v1.1h-1.2zM630.8 348.9h1.2v1.1h-1.2zM631.6 348.9h1.2v1.1h-1.2zM634.8 351.3h1.2v1.1h-1.2zM638.0 353.7h1.2v1.1h-1.2zM640.5 351.3h1.2v1.1h-1.2zM641.3 351.3h1.2v1.1h-1.2zM642.9 353.7h1.2v1.1h-1.2zM643.7 353.7h1.2v1.1h-1.2zM647.7 360.9h1.2v1.1h-1.2zM648.5 360.9h1.2v1.1h-1.2zM662.2 317.7h1.2v1.1h-1.2zM664.6 317.7h1.2v1.1h-1.2zM671.0 334.5h1.2v1.1h-1.2zM675.8 334.5h1.2v1.1h-1.2zM678.2 322.5h1.2v1.1h-1.2zM678.2 322.5h1.2v3.5h-1.2zM683.9 336.9h1.2v1.1h-1.2zM687.1 336.9h1.2v1.1h-1.2zM688.7 327.3h1.2v1.1h-1.2zM688.7 324.9h1.2v3.5h-1.2zM699.9 324.9h1.2v1.1h-1.2zM701.6 320.1h1.2v1.1h-1.2zM712.0 305.7h1.2v1.1h-1.2zM716.8 286.5h1.2v1.1h-1.2zM722.5 291.3h1.2v1.1h-1.2zM724.9 291.3h1.2v1.1h-1.2zM725.7 291.3h1.2v1.1h-1.2zM726.5 291.3h1.2v1.1h-1.2zM726.5 288.9h1.2v3.5h-1.2zM727.3 291.3h1.2v1.1h-1.2zM728.1 291.3h1.2v1.1h-1.2zM728.9 291.3h1.2v1.1h-1.2zM729.7 291.3h1.2v1.1h-1.2zM729.7 291.3h1.2v3.5h-1.2zM730.5 291.3h1.2v1.1h-1.2zM732.1 284.1h1.2v1.1h-1.2zM732.1 284.1h1.2v3.5h-1.2zM733.7 279.3h1.2v1.1h-1.2zM734.5 279.3h1.2v1.1h-1.2zM735.3 279.3h1.2v1.1h-1.2zM736.1 279.3h1.2v1.1h-1.2zM736.9 279.3h1.2v1.1h-1.2zM738.5 274.5h1.2v1.1h-1.2zM741.0 269.7h1.2v1.1h-1.2zM749.0 248.1h1.2v1.1h-1.2zM749.8 248.1h1.2v1.1h-1.2zM749.8 248.1h1.2v3.5h-1.2zM750.6 248.1h1.2v1.1h-1.2zM752.2 248.1h1.2v1.1h-1.2zM753.8 248.1h1.2v1.1h-1.2zM753.8 245.7h1.2v3.5h-1.2zM754.6 248.1h1.2v1.1h-1.2zM758.6 236.1h1.2v1.1h-1.2zM760.2 236.1h1.2v1.1h-1.2zM761.9 238.5h1.2v1.1h-1.2zM762.7 238.5h1.2v1.1h-1.2zM765.9 233.7h1.2v1.1h-1.2zM765.9 233.7h1.2v3.5h-1.2zM768.3 236.1h1.2v1.1h-1.2zM777.9 257.7h1.2v1.1h-1.2zM780.3 264.9h1.2v1.1h-1.2zM787.6 245.7h1.2v1.1h-1.2zM790.0 245.7h1.2v1.1h-1.2zM790.8 245.7h1.2v1.1h-1.2zM791.6 245.7h1.2v1.1h-1.2zM794.8 245.7h1.2v1.1h-1.2zM798.8 243.3h1.2v1.1h-1.2zM801.3 245.7h1.2v1.1h-1.2zM803.7 250.5h1.2v1.1h-1.2zM805.3 250.5h1.2v1.1h-1.2zM806.9 250.5h1.2v1.1h-1.2zM816.5 245.7h1.2v1.1h-1.2zM821.4 240.9h1.2v1.1h-1.2zM824.6 250.5h1.2v1.1h-1.2zM825.4 250.5h1.2v1.1h-1.2zM830.2 245.7h1.2v1.1h-1.2zM833.4 245.7h1.2v1.1h-1.2zM838.2 252.9h1.2v1.1h-1.2zM840.6 257.7h1.2v1.1h-1.2zM846.3 250.5h1.2v1.1h-1.2zM850.3 248.1h1.2v1.1h-1.2zM853.5 240.9h1.2v1.1h-1.2zM861.6 238.5h1.2v1.1h-1.2zM862.4 238.5h1.2v1.1h-1.2zM865.6 233.7h1.2v1.1h-1.2zM866.4 233.7h1.2v1.1h-1.2zM868.8 231.3h1.2v1.1h-1.2zM870.4 231.3h1.2v1.1h-1.2zM870.4 231.3h1.2v3.5h-1.2zM874.4 231.3h1.2v1.1h-1.2zM879.2 238.5h1.2v1.1h-1.2zM880.8 238.5h1.2v1.1h-1.2zM891.3 228.9h1.2v1.1h-1.2zM893.7 224.1h1.2v1.1h-1.2zM900.9 219.3h1.2v1.1h-1.2zM905.0 219.3h1.2v1.1h-1.2zM907.4 219.3h1.2v1.1h-1.2zM909.8 219.3h1.2v1.1h-1.2zM914.6 219.3h1.2v1.1h-1.2zM917.8 224.1h1.2v1.1h-1.2zM918.6 224.1h1.2v1.1h-1.2zM925.1 224.1h1.2v1.1h-1.2zM928.3 226.5h1.2v1.1h-1.2zM928.3 224.1h1.2v3.5h-1.2zM935.5 233.7h1.2v1.1h-1.2zM937.1 231.3h1.2v1.1h-1.2zM945.2 233.7h1.2v1.1h-1.2zM948.4 228.9h1.2v1.1h-1.2zM950.0 228.9h1.2v1.1h-1.2zM950.0 226.5h1.2v3.5h-1.2zM961.2 221.7h1.2v1.1h-1.2zM963.7 221.7h1.2v1.1h-1.2zM966.9 221.7h1.2v1.1h-1.2z" fill="#dcd45c" opacity="0.85"/>
<path d="M42.4 289.0h1.0v3.4h-1.0zM44.8 291.4h1.0v5.8h-1.0zM48.0 293.8h1.0v5.8h-1.0zM58.5 279.4h1.0v3.4h-1.0zM103.5 277.0h1.0v3.4h-1.0zM109.1 272.2h1.0v3.4h-1.0zM122.8 272.2h1.0v3.4h-1.0zM126.8 272.2h1.0v5.8h-1.0zM143.7 267.4h1.0v3.4h-1.0zM159.8 260.2h1.0v3.4h-1.0zM184.7 255.4h1.0v3.4h-1.0zM191.9 253.0h1.0v3.4h-1.0zM199.2 255.4h1.0v3.4h-1.0zM200.0 257.8h1.0v3.4h-1.0zM224.9 255.4h1.0v3.4h-1.0zM226.5 257.8h1.0v3.4h-1.0zM229.7 260.2h1.0v5.8h-1.0zM237.7 260.2h1.0v3.4h-1.0zM258.7 257.8h1.0v3.4h-1.0zM261.1 257.8h1.0v3.4h-1.0zM263.5 260.2h1.0v5.8h-1.0zM265.9 262.6h1.0v5.8h-1.0zM274.7 265.0h1.0v5.8h-1.0zM279.6 265.0h1.0v8.2h-1.0zM281.2 272.2h1.0v5.8h-1.0zM282.0 277.0h1.0v5.8h-1.0zM293.2 269.8h1.0v3.4h-1.0zM303.7 267.4h1.0v3.4h-1.0zM313.3 269.8h1.0v8.2h-1.0zM331.8 267.4h1.0v8.2h-1.0zM337.4 274.6h1.0v3.4h-1.0zM343.9 277.0h1.0v5.8h-1.0zM348.7 281.8h1.0v10.6h-1.0zM350.3 291.4h1.0v8.2h-1.0zM351.9 298.6h1.0v8.2h-1.0zM353.5 305.8h1.0v5.8h-1.0zM354.3 310.6h1.0v3.4h-1.0zM355.9 313.0h1.0v5.8h-1.0zM360.0 317.8h1.0v8.2h-1.0zM371.2 325.0h1.0v3.4h-1.0zM372.0 327.4h1.0v3.4h-1.0zM376.8 329.8h1.0v3.4h-1.0zM377.6 332.2h1.0v3.4h-1.0zM382.5 334.6h1.0v8.2h-1.0zM399.4 337.0h1.0v5.8h-1.0zM417.0 327.4h1.0v3.4h-1.0zM429.1 327.4h1.0v3.4h-1.0zM435.5 317.8h1.0v3.4h-1.0zM437.1 320.2h1.0v3.4h-1.0zM447.6 315.4h1.0v3.4h-1.0zM450.8 317.8h1.0v8.2h-1.0zM460.5 317.8h1.0v3.4h-1.0zM462.9 315.4h1.0v10.6h-1.0zM466.9 325.0h1.0v3.4h-1.0zM469.3 327.4h1.0v5.8h-1.0zM473.3 332.2h1.0v8.2h-1.0zM483.8 334.6h1.0v3.4h-1.0zM491.0 332.2h1.0v5.8h-1.0zM500.7 332.2h1.0v3.4h-1.0zM501.5 334.6h1.0v3.4h-1.0zM515.1 322.6h1.0v5.8h-1.0zM531.2 313.0h1.0v5.8h-1.0zM537.6 313.0h1.0v3.4h-1.0zM540.1 313.0h1.0v5.8h-1.0zM548.9 308.2h1.0v5.8h-1.0zM552.1 313.0h1.0v3.4h-1.0zM560.2 305.8h1.0v5.8h-1.0zM561.0 310.6h1.0v3.4h-1.0zM561.8 313.0h1.0v3.4h-1.0zM573.8 291.4h1.0v3.4h-1.0zM584.3 293.8h1.0v8.2h-1.0zM588.3 298.6h1.0v8.2h-1.0zM589.9 305.8h1.0v3.4h-1.0zM593.1 308.2h1.0v5.8h-1.0zM595.5 313.0h1.0v5.8h-1.0zM597.1 317.8h1.0v3.4h-1.0zM598.7 320.2h1.0v8.2h-1.0zM605.2 322.6h1.0v10.6h-1.0zM607.6 332.2h1.0v5.8h-1.0zM609.2 334.6h1.0v3.4h-1.0zM612.4 337.0h1.0v5.8h-1.0zM618.0 332.2h1.0v5.8h-1.0zM619.6 337.0h1.0v5.8h-1.0zM628.5 341.8h1.0v8.2h-1.0zM633.3 346.6h1.0v5.8h-1.0zM637.3 351.4h1.0v3.4h-1.0zM642.2 351.4h1.0v3.4h-1.0zM645.4 353.8h1.0v5.8h-1.0zM646.2 358.6h1.0v3.4h-1.0zM661.5 310.6h1.0v8.2h-1.0zM665.5 317.8h1.0v8.2h-1.0zM666.3 325.0h1.0v3.4h-1.0zM668.7 327.4h1.0v3.4h-1.0zM670.3 329.8h1.0v5.8h-1.0zM671.9 334.6h1.0v3.4h-1.0zM680.8 322.6h1.0v10.6h-1.0zM683.2 332.2h1.0v5.8h-1.0zM691.2 327.4h1.0v5.8h-1.0zM693.6 332.2h1.0v5.8h-1.0zM694.4 337.0h1.0v3.4h-1.0zM703.3 320.2h1.0v3.4h-1.0zM721.0 281.8h1.0v10.6h-1.0zM761.2 236.2h1.0v3.4h-1.0zM767.6 233.8h1.0v3.4h-1.0zM770.8 233.8h1.0v5.8h-1.0zM771.6 238.6h1.0v3.4h-1.0zM772.4 241.0h1.0v5.8h-1.0zM773.2 245.8h1.0v5.8h-1.0zM774.8 250.6h1.0v3.4h-1.0zM777.2 253.0h1.0v5.8h-1.0zM778.8 257.8h1.0v3.4h-1.0zM779.6 260.2h1.0v5.8h-1.0zM796.5 241.0h1.0v3.4h-1.0zM799.7 243.4h1.0v3.4h-1.0zM802.2 245.8h1.0v5.8h-1.0zM815.0 241.0h1.0v5.8h-1.0zM823.1 241.0h1.0v5.8h-1.0zM823.9 245.8h1.0v5.8h-1.0zM835.9 245.8h1.0v5.8h-1.0zM836.7 250.6h1.0v3.4h-1.0zM839.1 253.0h1.0v5.8h-1.0zM848.0 250.6h1.0v5.8h-1.0zM856.0 238.6h1.0v3.4h-1.0zM860.0 236.2h1.0v3.4h-1.0zM875.3 231.4h1.0v3.4h-1.0zM876.9 233.8h1.0v3.4h-1.0zM877.7 236.2h1.0v5.8h-1.0zM902.7 217.0h1.0v3.4h-1.0zM917.1 219.4h1.0v5.8h-1.0zM927.6 224.2h1.0v3.4h-1.0zM932.4 226.6h1.0v8.2h-1.0zM942.9 231.4h1.0v3.4h-1.0zM959.7 217.0h1.0v5.8h-1.0zM609.5 330.0h1.0v16.5h-1.0zM780.0 255.0h1.0v12.0h-1.0zM646.5 352.0h1.0v11.5h-1.0zM718.2 281.5h1.0v11.5h-1.0z" fill="#0a70e4" opacity="0.9"/>
<path d="M27.9 298.6h1.0v5.8h-1.0zM30.3 293.8h1.0v5.8h-1.0zM32.7 291.4h1.0v3.4h-1.0zM37.6 289.0h1.0v3.4h-1.0zM47.2 293.8h1.0v3.4h-1.0zM48.8 296.2h1.0v3.4h-1.0zM50.4 291.4h1.0v5.8h-1.0zM53.6 284.2h1.0v8.2h-1.0zM55.2 279.4h1.0v5.8h-1.0zM75.3 277.0h1.0v5.8h-1.0zM104.3 277.0h1.0v3.4h-1.0zM106.7 272.2h1.0v5.8h-1.0zM113.9 272.2h1.0v3.4h-1.0zM123.6 272.2h1.0v3.4h-1.0zM129.2 272.2h1.0v5.8h-1.0zM135.6 267.4h1.0v5.8h-1.0zM149.3 267.4h1.0v3.4h-1.0zM152.5 265.0h1.0v3.4h-1.0zM154.9 260.2h1.0v5.8h-1.0zM161.4 260.2h1.0v3.4h-1.0zM183.1 255.4h1.0v5.8h-1.0zM187.1 255.4h1.0v3.4h-1.0zM189.5 253.0h1.0v3.4h-1.0zM217.6 257.8h1.0v3.4h-1.0zM218.5 255.4h1.0v3.4h-1.0zM231.3 260.2h1.0v5.8h-1.0zM247.4 257.8h1.0v5.8h-1.0zM259.5 257.8h1.0v3.4h-1.0zM264.3 262.6h1.0v3.4h-1.0zM269.9 265.0h1.0v3.4h-1.0zM276.3 265.0h1.0v5.8h-1.0zM284.4 274.6h1.0v8.2h-1.0zM289.2 269.8h1.0v5.8h-1.0zM296.4 267.4h1.0v5.8h-1.0zM323.8 274.6h1.0v3.4h-1.0zM327.0 269.8h1.0v5.8h-1.0zM328.6 267.4h1.0v3.4h-1.0zM384.9 337.0h1.0v5.8h-1.0zM403.4 339.4h1.0v3.4h-1.0zM405.0 337.0h1.0v3.4h-1.0zM406.6 334.6h1.0v3.4h-1.0zM408.2 329.8h1.0v5.8h-1.0zM413.0 327.4h1.0v3.4h-1.0zM420.3 327.4h1.0v3.4h-1.0zM433.9 320.2h1.0v10.6h-1.0zM434.7 317.8h1.0v3.4h-1.0zM438.7 320.2h1.0v3.4h-1.0zM442.0 315.4h1.0v5.8h-1.0zM454.0 322.6h1.0v3.4h-1.0zM458.0 317.8h1.0v5.8h-1.0zM461.3 315.4h1.0v5.8h-1.0zM477.3 334.6h1.0v5.8h-1.0zM485.4 332.2h1.0v5.8h-1.0zM496.6 332.2h1.0v5.8h-1.0zM503.9 334.6h1.0v3.4h-1.0zM504.7 332.2h1.0v3.4h-1.0zM507.9 329.8h1.0v3.4h-1.0zM508.7 325.0h1.0v5.8h-1.0zM509.5 322.6h1.0v3.4h-1.0zM516.7 325.0h1.0v3.4h-1.0zM519.1 322.6h1.0v3.4h-1.0zM521.6 317.8h1.0v5.8h-1.0zM527.2 313.0h1.0v5.8h-1.0zM536.8 313.0h1.0v5.8h-1.0zM538.4 313.0h1.0v3.4h-1.0zM540.9 315.4h1.0v3.4h-1.0zM548.1 308.2h1.0v8.2h-1.0zM556.9 305.8h1.0v10.6h-1.0zM566.6 310.6h1.0v5.8h-1.0zM570.6 301.0h1.0v10.6h-1.0zM572.2 291.4h1.0v10.6h-1.0zM585.9 298.6h1.0v3.4h-1.0zM599.5 322.6h1.0v5.8h-1.0zM608.4 334.6h1.0v3.4h-1.0zM614.0 337.0h1.0v5.8h-1.0zM616.4 332.2h1.0v5.8h-1.0zM632.5 346.6h1.0v3.4h-1.0zM639.7 351.4h1.0v3.4h-1.0zM649.4 356.2h1.0v5.8h-1.0zM651.0 346.6h1.0v10.6h-1.0zM653.4 337.0h1.0v10.6h-1.0zM654.2 332.2h1.0v5.8h-1.0zM655.8 325.0h1.0v8.2h-1.0zM657.4 315.4h1.0v10.6h-1.0zM658.2 310.6h1.0v5.8h-1.0zM674.3 334.6h1.0v3.4h-1.0zM676.7 329.8h1.0v5.8h-1.0zM677.5 322.6h1.0v8.2h-1.0zM688.0 327.4h1.0v10.6h-1.0zM697.6 334.6h1.0v5.8h-1.0zM698.4 329.8h1.0v5.8h-1.0zM699.2 325.0h1.0v5.8h-1.0zM700.9 320.2h1.0v5.8h-1.0zM706.5 313.0h1.0v10.6h-1.0zM708.1 308.2h1.0v5.8h-1.0zM711.3 305.8h1.0v3.4h-1.0zM712.9 301.0h1.0v5.8h-1.0zM714.5 296.2h1.0v5.8h-1.0zM716.1 286.6h1.0v10.6h-1.0zM718.5 281.8h1.0v5.8h-1.0zM731.4 284.2h1.0v8.2h-1.0zM733.0 279.4h1.0v5.8h-1.0zM737.8 274.6h1.0v5.8h-1.0zM739.4 272.2h1.0v3.4h-1.0zM740.2 269.8h1.0v3.4h-1.0zM745.9 260.2h1.0v10.6h-1.0zM746.7 253.0h1.0v8.2h-1.0zM748.3 248.2h1.0v5.8h-1.0zM757.1 238.6h1.0v10.6h-1.0zM757.9 236.2h1.0v3.4h-1.0zM763.6 236.2h1.0v3.4h-1.0zM765.2 233.8h1.0v3.4h-1.0zM769.2 233.8h1.0v3.4h-1.0zM784.5 255.4h1.0v10.6h-1.0zM786.1 245.8h1.0v10.6h-1.0zM795.7 241.0h1.0v5.8h-1.0zM812.6 241.0h1.0v10.6h-1.0zM820.6 241.0h1.0v5.8h-1.0zM826.3 245.8h1.0v5.8h-1.0zM844.0 255.4h1.0v3.4h-1.0zM845.6 250.6h1.0v5.8h-1.0zM848.8 248.2h1.0v8.2h-1.0zM851.2 243.4h1.0v5.8h-1.0zM852.0 241.0h1.0v3.4h-1.0zM855.2 238.6h1.0v3.4h-1.0zM857.6 238.6h1.0v3.4h-1.0zM858.4 236.2h1.0v3.4h-1.0zM864.9 233.8h1.0v5.8h-1.0zM867.3 231.4h1.0v3.4h-1.0zM878.5 238.6h1.0v3.4h-1.0zM882.6 229.0h1.0v10.6h-1.0zM892.2 224.2h1.0v5.8h-1.0zM897.8 219.4h1.0v5.8h-1.0zM901.9 217.0h1.0v3.4h-1.0zM936.4 231.4h1.0v3.4h-1.0zM947.7 229.0h1.0v5.8h-1.0zM952.5 226.6h1.0v3.4h-1.0zM957.3 217.0h1.0v10.6h-1.0zM395.0 326.0h1.0v22.5h-1.0zM658.2 308.5h1.0v13.5h-1.0zM689.5 319.0h1.0v22.5h-1.0zM882.8 215.8h1.0v15.0h-1.0zM329.5 265.2h1.0v7.8h-1.0z" fill="#e00808" opacity="0.9"/>
<polyline points="6.8,523.2 7.7,523.2 8.6,523.9 9.5,523.7 10.4,524.8 11.3,524.5 12.2,524.3 13.1,524.6 14.0,525.4 14.9,525.7 15.8,525.5 16.7,525.0 17.6,526.0 18.4,525.9 19.3,525.2 20.2,525.7 21.1,526.5 22.0,526.1 22.9,526.5 23.8,527.3 24.7,528.3 25.6,528.2 26.5,526.9 27.4,522.1 28.3,521.7 29.2,521.9 30.1,521.7 31.0,522.2 31.9,522.0 32.8,522.4 33.7,522.1 34.6,522.3 35.5,523.3 36.4,523.7 37.3,523.5 38.2,523.5 39.1,523.6 40.0,523.7 40.9,523.2 41.8,523.3 42.7,523.3 43.6,522.4 44.5,521.5 45.4,520.9 46.3,519.6 47.2,519.7 48.1,519.1 49.0,519.4 49.9,519.0 50.8,519.7 51.7,519.9 52.6,520.2 53.5,521.6 54.4,521.1 55.3,520.6 56.2,520.2 57.1,521.3 58.0,522.6 58.9,523.2 59.8,521.8 60.7,521.1 61.6,519.5 62.5,520.1 63.4,521.1 64.3,522.1 65.2,522.2 66.1,522.5 67.0,522.4 67.9,521.8 68.8,522.2 69.7,523.2 70.6,522.4 71.5,521.4 72.4,520.2 73.3,520.6 74.2,520.4 75.2,520.5 76.1,521.3 77.0,521.2 77.9,522.7 78.8,522.4 79.7,522.9 80.6,523.5 81.5,523.6 82.4,523.2 83.3,523.3 84.2,522.0 85.1,521.8 86.0,520.8 86.9,519.5 87.8,518.7 88.7,518.9 89.6,519.4 90.5,520.0 91.4,520.4 92.3,519.4 93.2,518.5 94.1,517.5 95.0,517.6 95.9,517.6 96.8,518.5 97.7,517.6 98.6,517.2 99.5,517.1 100.4,517.5 101.3,517.1 102.2,516.2 103.1,517.2 104.0,518.0 104.9,517.7 105.8,516.9 106.7,517.1 107.6,516.1 108.5,515.9 109.4,517.0 110.3,516.6 111.2,516.7 112.1,517.0 113.0,516.6 113.9,516.1 114.8,516.3 115.7,516.1 116.6,515.4 117.5,515.6 118.4,515.8 119.3,515.0 120.2,515.1 121.1,514.8 122.0,514.0 122.9,513.5 123.8,514.0 124.7,514.1 125.6,513.9 126.5,513.9 127.4,514.9 128.3,515.1 129.2,514.5 130.1,515.1 131.0,515.4 131.9,515.4 132.8,515.3 133.7,516.0 134.6,516.6 135.5,516.9 136.4,517.0 137.3,516.3 138.2,516.2 139.1,516.1 140.0,516.0 140.9,515.7 141.8,516.2 142.7,515.0 143.6,515.9 144.5,514.8 145.4,515.4 146.3,514.4 147.2,514.7 148.1,514.2 149.0,513.7 149.9,514.4 150.8,514.2 151.7,513.6 152.6,514.6 153.5,514.6 154.4,515.6 155.3,514.8 156.2,515.6 157.1,515.7 158.0,515.9 158.9,515.2 159.8,514.4 160.7,513.2 161.6,512.6 162.5,513.7 163.4,513.4 164.3,514.2 165.2,515.2 166.1,514.2 167.0,514.3 167.9,512.6 168.8,512.5 169.7,512.5 170.6,512.6 171.5,513.1 172.4,513.4 173.3,514.1 174.2,514.4 175.1,514.6 176.0,514.4 176.9,514.9 177.8,514.7 178.7,515.4 179.6,514.4 180.5,514.9 181.4,514.9 182.3,514.8 183.2,515.6 184.1,515.1 185.0,516.1 185.9,515.7 186.8,515.9 187.7,516.5 188.6,516.7 189.5,516.6 190.4,516.3 191.3,516.9 192.2,515.8 193.1,515.0 194.0,515.2 194.9,514.6 195.8,514.3 196.7,514.3 197.6,514.9 198.5,514.2 199.4,514.3 200.3,514.9 201.2,514.2 202.1,514.2 203.0,513.9 203.9,514.5 204.8,514.5 205.7,514.2 206.6,514.2 207.5,513.9 208.4,514.9 209.3,514.8 210.2,515.5 211.1,515.2 212.0,516.0 212.9,515.4 213.8,515.9 214.7,516.6 215.6,516.0 216.5,515.7 217.4,515.2 218.3,515.0 219.2,514.4 220.1,514.1 221.0,514.6 221.9,514.5 222.8,513.9 223.7,514.3 224.6,513.6 225.5,514.1 226.4,513.5 227.3,513.8 228.2,513.3 229.1,513.2 230.0,512.3 230.9,512.4 231.8,512.2 232.7,511.3 233.6,511.1 234.5,511.6 235.4,511.6 236.3,511.9 237.2,512.3 238.1,512.2 239.0,512.0 239.9,512.4 240.8,512.8 241.7,512.4 242.6,512.5 243.5,511.9 244.4,511.9 245.3,512.4 246.2,512.1 247.1,511.8 248.0,511.0 248.9,511.5 249.8,510.7 250.7,511.8 251.6,511.8 252.5,511.5 253.4,511.0 254.3,511.7 255.2,510.9 256.1,511.6 257.0,511.3 257.9,510.7 258.8,511.7 259.7,511.2 260.6,511.8 261.5,511.8 262.4,511.8 263.3,512.4 264.2,511.9 265.1,512.9 266.0,512.4 266.9,512.3 267.8,512.8 268.7,512.5 269.6,512.5 270.5,513.2 271.4,512.6 272.3,512.7 273.2,512.9 274.1,512.9 275.0,513.7 275.9,513.7 276.8,513.7 277.7,513.8 278.6,512.8 279.5,512.8 280.4,511.8 281.3,512.3 282.2,511.8 283.1,511.3 284.0,510.5 284.9,510.7 285.8,512.1 286.7,512.0 287.6,512.4 288.5,513.1 289.4,512.6 290.3,513.6 291.2,513.6 292.1,514.2 293.0,514.1 293.9,514.1 294.8,515.3 295.7,514.6 296.6,514.4 297.5,513.8 298.4,512.3 299.3,512.1 300.2,511.1 301.1,510.7 301.9,510.6 302.8,511.3 303.7,510.4 304.6,510.4 305.5,510.3 306.4,509.6 307.3,510.3 308.2,510.1 309.1,510.1 310.0,509.3 310.9,509.1 311.8,509.2 312.7,509.6 313.6,509.4 314.5,509.0 315.4,509.1 316.3,508.6 317.2,509.5 318.1,508.9 319.0,508.8 319.9,509.1 320.8,508.2 321.7,508.7 322.6,508.1 323.5,508.5 324.4,507.5 325.3,507.6 326.2,507.9 327.1,507.5 328.0,506.6 328.9,505.7 329.8,504.0 330.7,503.1 331.6,501.6 332.5,501.9 333.4,500.6 334.3,500.6 335.2,499.6 336.1,498.9 337.0,499.5 337.9,499.5 338.8,500.8 339.7,499.5 340.6,499.4 341.5,498.6 342.4,497.8 343.3,498.1 344.2,497.9 345.1,498.4 346.0,498.9 346.9,498.2 347.8,498.2 348.7,498.2 349.6,498.0 350.5,497.3 351.4,496.9 352.3,496.3 353.2,494.4 354.1,493.0 355.0,492.2 355.9,491.9 356.8,490.6 357.7,490.1 358.6,489.4 359.5,489.2 360.4,489.3 361.3,489.7 362.2,488.7 363.1,489.8 364.0,489.3 364.9,490.2 365.8,492.2 366.7,493.1 367.6,494.2 368.5,494.9 369.4,495.4 370.3,494.2 371.2,494.1 372.1,492.9 373.0,493.5 373.9,494.1 374.8,494.4 375.7,495.1 376.6,494.9 377.5,495.5 378.4,495.4 379.3,494.7 380.2,495.2 381.1,496.1 382.0,496.0 382.9,497.5 383.8,498.2 384.7,497.9 385.6,498.8 386.5,498.9 387.4,498.7 388.3,498.2 389.2,498.3 390.1,497.8 391.0,498.5 391.9,499.4 392.8,499.9 393.7,501.0 394.6,501.6 395.5,501.5 396.4,502.0 397.3,500.8 398.2,500.3 399.1,499.1 400.0,498.9 400.9,498.1 401.8,498.0 402.7,497.0 403.6,496.8 404.5,497.5 405.4,497.1 406.3,497.6 407.2,496.9 408.1,497.1 409.0,497.2 409.9,498.7 410.8,498.6 411.7,498.0 412.6,496.8 413.5,496.0 414.4,494.9 415.3,493.7 416.2,493.2 417.1,493.3 418.0,493.7 418.9,493.0 419.8,493.1 420.7,492.9 421.6,492.6 422.5,492.6 423.4,492.3 424.3,492.8 425.2,493.2 426.1,492.4 427.0,492.8 427.9,493.2 428.8,492.8 429.7,491.1 430.6,491.3 431.5,490.7 432.4,490.4 433.3,489.5 434.2,488.6 435.1,488.4 436.0,488.4 436.9,488.0 437.8,486.8 438.7,486.5 439.6,485.8 440.5,484.9 441.4,483.4 442.3,483.1 443.2,483.2 444.1,484.0 445.0,484.2 445.9,484.4 446.8,484.6 447.7,483.2 448.6,482.9 449.5,481.5 450.4,481.4 451.3,482.0 452.2,481.4 453.1,482.3 454.0,481.7 454.9,483.0 455.8,482.4 456.7,483.8 457.6,483.9 458.5,484.2 459.4,485.0 460.3,485.3 461.2,484.5 462.1,483.5 463.0,483.4 463.9,482.5 464.8,482.7 465.7,481.6 466.6,481.3 467.5,480.7 468.4,481.2 469.3,479.8 470.2,479.4 471.1,478.9 472.0,477.6 472.9,477.2 473.8,475.8 474.7,474.3 475.6,472.9 476.5,472.0 477.4,471.1 478.3,469.0 479.2,468.6 480.1,468.9 481.0,468.1 481.9,467.9 482.8,468.2 483.7,467.9 484.6,469.1 485.5,469.7 486.4,469.5 487.3,470.5 488.2,471.0 489.1,470.1 490.0,469.7 490.9,469.4 491.8,467.8 492.7,467.2 493.6,466.5 494.5,464.9 495.4,465.0 496.3,463.3 497.2,464.0 498.1,464.9 499.0,464.5 499.9,465.3 500.8,464.6 501.7,464.5 502.6,463.4 503.5,463.1 504.4,462.7 505.3,462.0 506.2,461.5 507.1,462.4 508.0,463.5 508.9,463.7 509.8,465.3 510.7,464.6 511.6,464.1 512.5,463.8 513.4,464.2 514.3,462.9 515.2,463.5 516.1,462.8 517.0,463.8 517.9,463.1 518.8,463.4 519.7,463.7 520.6,462.8 521.5,462.7 522.4,463.5 523.3,463.4 524.2,463.5 525.1,463.0 526.0,463.2 526.9,462.9 527.8,463.2 528.7,463.0 529.6,463.4 530.5,463.0 531.4,463.0 532.3,463.4 533.2,462.8 534.1,464.1 535.0,464.7 535.9,465.4 536.8,466.3 537.7,467.5 538.6,467.4 539.5,467.6 540.4,467.2 541.3,467.1 542.2,467.7 543.1,466.9 544.0,467.6 544.9,467.5 545.8,466.9 546.7,466.0 547.6,464.4 548.5,464.3 549.4,464.5 550.3,464.8 551.2,466.5 552.1,466.8 553.0,467.8 553.9,468.1 554.8,467.7 555.7,468.7 556.6,468.0 557.5,468.3 558.4,468.8 559.3,468.6 560.2,469.2 561.1,469.8 562.0,469.4 562.9,470.4 563.8,470.0 564.7,470.3 565.6,470.3 566.5,470.2 567.4,469.2 568.3,469.2 569.2,470.6 570.1,471.0 571.0,472.1 571.9,473.1 572.8,474.6 573.7,474.2 574.6,473.5 575.5,472.5 576.4,472.1 577.3,471.4 578.2,471.1 579.1,472.4 580.0,472.7 580.9,472.8 581.8,473.4 582.7,472.8 583.6,472.5 584.5,471.0 585.4,470.9 586.3,470.3 587.2,470.9 588.1,471.0 589.0,471.4 589.9,471.0 590.8,471.6 591.7,471.2 592.6,471.0 593.5,471.1 594.4,470.4 595.3,468.9 596.2,467.4 597.1,466.9 598.0,466.0 598.9,465.7 599.8,465.9 600.7,465.2 601.6,465.1 602.5,464.5 603.4,464.5 604.3,465.1 605.2,464.4 606.1,465.1 607.0,464.3 607.9,464.8 608.8,463.9 609.7,463.5 610.6,463.4 611.5,462.7 612.4,462.9 613.3,462.7 614.2,462.1 615.1,462.9 616.0,462.1 616.9,461.5 617.8,462.1 618.7,460.0 619.6,458.9 620.5,457.5 621.4,456.4 622.3,455.9 623.2,457.3 624.1,459.3 625.0,460.9 625.9,459.9 626.8,459.7 627.7,458.0 628.6,457.7 629.5,458.0 630.4,457.7 631.3,459.2 632.2,458.8 633.1,459.6 634.0,459.5 634.9,459.1 635.8,458.7 636.7,458.8 637.6,457.8 638.5,458.0 639.4,457.5 640.3,457.4 641.2,456.9 642.1,457.3 643.0,456.7 643.9,456.4 644.8,455.6 645.7,455.0 646.6,454.8 647.5,454.1 648.4,453.7 649.3,453.2 650.2,453.8 651.1,453.0 652.0,452.5 652.9,452.6 653.8,452.9 654.7,453.1 655.6,453.2 656.5,453.9 657.4,455.0 658.3,455.5 659.2,455.2 660.1,454.8 661.0,454.7 661.9,453.8 662.8,453.7 663.7,455.3 664.6,456.6 665.5,457.0 666.4,458.5 667.3,459.8 668.2,459.8 669.1,460.7 670.0,462.0 670.9,462.8 671.8,462.9 672.7,461.7 673.6,459.8 674.5,459.0 675.4,459.4 676.3,461.4 677.2,464.9 678.1,467.9 679.0,472.2 679.9,472.8 680.8,471.2 681.7,472.2 682.6,473.9 683.5,476.4 684.4,476.1 685.3,476.7 686.2,476.6 687.1,476.4 688.0,475.9 688.9,476.3 689.8,477.7 690.7,478.7 691.6,478.4 692.5,475.2 693.4,472.0 694.3,472.0 695.2,473.3 696.1,473.3 697.0,472.3 697.9,470.5 698.8,469.3 699.7,468.6 700.6,470.3 701.5,470.2 702.4,465.5 703.3,461.8 704.2,461.9 705.1,461.8 706.0,462.0 706.9,460.8 707.8,460.4 708.7,459.5 709.6,459.1 710.5,457.6 711.4,457.4 712.3,456.3 713.2,455.5 714.1,454.5 715.0,454.9 715.9,456.6 716.8,457.7 717.7,457.9 718.6,456.7 719.5,456.7 720.4,456.1 721.3,455.1 722.2,453.7 723.1,451.8 724.0,451.6 724.9,450.3 725.8,448.7 726.7,448.3 727.6,447.1 728.5,446.0 729.4,444.1 730.3,443.5 731.2,442.4 732.1,441.4 733.0,441.0 733.9,440.3 734.8,440.9 735.7,442.1 736.6,443.4 737.5,443.8 738.4,443.4 739.3,442.3 740.2,442.0 741.1,440.1 742.0,439.8 742.9,439.3 743.8,438.9 744.7,438.6 745.6,437.5 746.5,437.1 747.4,437.7 748.3,438.0 749.2,438.6 750.1,439.1 751.0,436.8 751.9,436.0 752.8,435.6 753.7,433.6 754.6,433.4 755.5,431.5 756.4,431.7 757.3,432.9 758.2,433.3 759.1,434.5 760.0,435.4 760.9,436.2 761.8,435.5 762.7,435.1 763.6,434.3 764.5,434.1 765.4,433.6 766.3,432.1 767.2,430.9 768.1,428.1 769.0,426.1 769.9,423.7 770.8,422.5 771.7,421.8 772.6,419.9 773.5,419.7 774.4,420.2 775.3,420.7 776.2,419.9 777.1,418.6 778.0,417.2 778.9,416.0 779.8,413.4 780.7,412.6 781.6,411.2 782.5,411.7 783.4,412.4 784.3,411.6 785.2,412.2 786.1,411.6 787.0,410.9 787.9,410.4 788.8,410.2 789.7,409.4 790.6,408.1 791.5,408.3 792.4,407.2 793.3,406.1 794.2,406.5 795.1,406.3 796.0,405.4 796.9,406.0 797.8,405.7 798.7,404.8 799.6,404.3 800.5,405.1 801.4,405.2 802.3,405.9 803.2,408.2 804.1,409.6 805.0,410.6 805.9,412.0 806.8,412.2 807.7,410.9 808.6,411.0 809.5,410.6 810.4,409.3 811.3,410.8 812.2,411.9 813.1,412.4 814.0,412.1 814.9,411.7 815.8,411.7 816.7,411.1 817.6,408.9 818.5,408.1 819.4,406.5 820.3,404.6 821.2,404.9 822.1,404.6 823.0,403.7 823.9,404.2 824.8,404.0 825.7,403.2 826.6,402.8 827.5,403.0 828.4,403.6 829.3,403.2 830.2,403.6 831.1,402.8 832.0,402.8 832.9,403.2 833.8,404.2 834.7,403.7 835.6,404.0 836.5,405.1 837.4,404.3 838.3,404.6 839.2,403.6 840.1,403.5 841.0,404.5 841.9,405.2 842.8,404.7 843.7,404.1 844.6,403.0 845.5,402.8 846.4,401.9 847.3,401.0 848.2,399.4 849.1,398.0 850.0,396.3 850.9,397.0 851.8,396.7 852.7,397.6 853.6,398.4 854.5,399.3 855.4,400.7 856.3,400.9 857.2,400.8 858.1,400.6 859.0,401.1 859.9,400.7 860.8,400.1 861.7,399.5 862.6,399.8 863.5,399.4 864.4,398.8 865.3,399.2 866.2,399.7 867.1,399.1 868.0,399.3 868.9,399.3 869.8,400.0 870.7,400.9 871.6,400.9 872.5,402.0 873.4,403.3 874.3,403.3 875.2,403.7 876.1,404.7 877.0,405.2 877.9,404.9 878.8,404.5 879.7,405.2 880.6,405.3 881.5,405.5 882.4,405.2 883.3,406.5 884.2,408.5 885.1,409.9 886.0,411.2 886.9,412.3 887.8,413.9 888.7,415.0 889.6,414.2 890.5,412.9 891.4,412.7 892.3,410.9 893.2,411.8 894.1,411.4 895.0,411.7 895.9,411.1 896.8,411.8 897.7,410.7 898.6,411.7 899.5,411.6 900.4,411.2 901.3,412.0 902.2,411.5 903.1,412.3 904.0,412.2 904.9,412.4 905.8,411.8 906.7,412.2 907.6,411.7 908.5,410.6 909.4,411.3 910.3,410.1 911.2,410.2 912.1,410.2 913.0,410.3 913.9,410.6 914.8,410.5 915.7,410.5 916.6,410.7 917.5,410.8 918.4,411.2 919.3,412.2 920.2,412.5 921.1,412.0 922.0,412.3 922.9,411.2 923.8,410.8 924.7,410.5 925.6,410.3 926.5,411.4 927.4,411.3 928.3,411.4 929.2,411.5 930.1,411.6 931.0,411.9 931.9,412.3 932.8,412.4 933.7,413.0 934.6,412.5 935.5,412.0 936.4,411.8 937.3,411.9 938.2,412.1 939.1,412.6 940.0,412.7 940.9,411.8 941.8,412.5 942.7,412.0 943.6,412.1 944.5,412.1 945.4,411.2 946.3,410.6 947.2,410.7 948.1,410.3 949.0,410.4 949.9,411.5 950.8,411.9 951.7,411.8 952.6,412.0 953.5,413.0 954.4,413.6 955.3,413.3 956.2,412.6 957.1,412.8 958.0,411.8 958.9,412.3 959.8,411.7 960.7,411.5 961.6,411.9 962.5,411.9 963.4,412.2 964.3,412.4 965.2,413.5 966.1,413.6 967.0,414.5" stroke="#f20606" stroke-width="1.6" fill="none" stroke-linejoin="round"/>
<text class="in" x="6.55" y="50.4" textLength="49">時刻:06:00</text>
<text class="in" x="60.45" y="50.4" textLength="53.9">始値:10,054</text>
<text class="in" x="119.25" y="50.4" textLength="53.9">高値:10,054</text>
<text class="in" x="178.05" y="50.4" textLength="53.9">安値:10,054</text>
<text class="in" x="236.85" y="50.4" textLength="53.9">終値:10,054</text>
<text class="in" x="6.55" y="217.8" textLength="49">時刻:06:00</text>
<text class="in" x="60.45" y="217.8" textLength="49">始値:4,312</text>
<text class="in" x="114.35" y="217.8" textLength="49">高値:4,312</text>
<text class="in" x="168.25" y="217.8" textLength="49">安値:4,312</text>
<text class="in" x="222.15" y="217.8" textLength="49">終値:4,312</text>
<text class="in" x="6.55" y="399.4" textLength="14.7">[金</text>
<text class="in" x="26.15" y="399.4" textLength="24.5">25/02</text>
<text class="in" x="55.55" y="399.4" textLength="29.4">10,054</text>
<text class="in" x="89.5" y="399.4" text-anchor="middle">×</text>
<text class="in" x="94.75" y="399.4" textLength="24.5">1.00]</text>
<text class="in" x="124.1" y="399.4" text-anchor="middle">-</text>
<text class="in" x="129.05" y="399.4" textLength="24.5">[白金</text>
<text class="in" x="158.45" y="399.4" textLength="24.5">25/02</text>
<text class="in" x="187.85" y="399.4" textLength="24.5">4,312</text>
<text class="in" x="216.9" y="399.4" text-anchor="middle">×</text>
<text class="in" x="222.15" y="399.4" textLength="24.5">1.00]</text>
<text class="in" x="251.55" y="399.4" textLength="19.6">終値</text>
<text class="in" x="276.05" y="399.4" textLength="49">時刻:06:00</text>
<text class="in" x="329.95" y="399.4" textLength="24.5">5,742</text>
<rect x="971.4" y="49.7" width="46.6" height="17.5" fill="#d5d5d5"/>
<text class="pt" x="980.01" y="61.45">10,054</text>
<rect x="971.4" y="210.2" width="46.6" height="16.2" fill="#d5d5d5"/>
<text class="pt" x="982.46" y="221.3">4,312</text>
<rect x="971.4" y="407.6" width="46.6" height="16.8" fill="#d5d5d5"/>
<text class="pt" x="982.46" y="419">5,742</text>
<rect x="8.3" y="7.2" width="10.8" height="10.6" fill="#f4f4f4"/>
<rect x="8.3" y="7.2" width="0.9" height="10.8" fill="#9a9a9a"/><rect x="8.3" y="17.4" width="11" height="0.9" fill="#9a9a9a"/>
<rect x="9.65" y="12" width="1.3" height="4.6" fill="#f01020"/>
<rect x="10.95" y="10.6" width="1.3" height="4.8" fill="#f01020"/>
<rect x="12.25" y="8.6" width="1.3" height="5.8" fill="#2070f0"/>
<rect x="13.55" y="7.6" width="1.3" height="5.4" fill="#f01020"/>
<rect x="14.85" y="8.8" width="1.3" height="5.8" fill="#f01020"/>
<rect x="16.15" y="9.6" width="1.3" height="4.0" fill="#2070f0"/>
<rect x="17.25" y="9" width="1.3" height="5.0" fill="#f01020"/>
<text x="23.2" y="16.5" font-size="10.2" fill="#111">金</text>
<text x="33.7" y="16.3" font-size="10.6" fill="#111" textLength="4.3" lengthAdjust="spacingAndGlyphs">1</text>
<text x="37.1" y="16.5" font-size="10.2" fill="#111" textLength="19.2" lengthAdjust="spacingAndGlyphs">分足</text>
<text x="57.6" y="16.3" font-size="10.6" fill="#111" textLength="38.4" lengthAdjust="spacingAndGlyphs">[2025/02]</text>
<text x="97.2" y="16.3" font-size="10.6" fill="#111" textLength="15.2" lengthAdjust="spacingAndGlyphs">1.00</text>
<text x="116.6" y="16.3" font-size="10.6" fill="#111">-</text>
<text x="123.1" y="16.5" font-size="10.2" fill="#111" textLength="19.7" lengthAdjust="spacingAndGlyphs">白金</text>
<text x="143.5" y="16.3" font-size="10.6" fill="#111" textLength="4.3" lengthAdjust="spacingAndGlyphs">1</text>
<text x="147.4" y="16.5" font-size="10.2" fill="#111" textLength="19.3" lengthAdjust="spacingAndGlyphs">分足</text>
<text x="167.8" y="16.3" font-size="10.6" fill="#111" textLength="39.4" lengthAdjust="spacingAndGlyphs">[2025/02]</text>
<text x="207.8" y="16.3" font-size="10.6" fill="#111" textLength="14.2" lengthAdjust="spacingAndGlyphs">1.00</text>
<rect x="973.4" y="5.6" width="12.6" height="13.8" rx="2.2" fill="url(#btn)" stroke="#a9a9a9" stroke-width="1"/>
<rect x="989.3" y="5.6" width="13.3" height="13.8" rx="2.2" fill="url(#btn)" stroke="#a9a9a9" stroke-width="1"/>
<rect x="1005.2" y="5.6" width="13.3" height="13.8" rx="2.2" fill="url(#btn)" stroke="#a9a9a9" stroke-width="1"/>
<rect x="955.8" y="8.2" width="8.2" height="6.6" fill="#e6e6e6" stroke="#8a8a8a" stroke-width="1"/>
<rect x="958.4" y="10.6" width="8.2" height="6.4" fill="#eeeeee" stroke="#6a6a6a" stroke-width="1.1"/>
<rect x="976.8" y="14.4" width="5.6" height="1.5" fill="#5a5a5a"/>
<rect x="993.3" y="10.2" width="5.4" height="5.2" fill="none" stroke="#5a5a5a" stroke-width="1.1"/><rect x="992.8" y="9.6" width="6.4" height="1.4" fill="#5a5a5a"/>
<path d="M1009 9.8L1014.8 15.6M1014.8 9.8L1009 15.6" stroke="#5a5a5a" stroke-width="1.4" fill="none"/>
<text x="8.7" y="34.3" font-size="9.6" fill="#202020">金</text>
<text x="27.4" y="34.2" font-size="10.6" fill="#202020" textLength="32" lengthAdjust="spacingAndGlyphs">2025/02</text>
<rect x="65.1" y="23.8" width="38.2" height="13.4" fill="#ffffff"/>
<rect x="65.1" y="23.8" width="38.2" height="0.7" fill="#b8bcc8"/>
<rect x="92.1" y="24.6" width="9.8" height="11.8" fill="#e6e6e6"/>
<rect x="92.1" y="30.2" width="9.8" height="0.6" fill="#c4c4c4"/>
<path d="M94.5 29.0L97.0 26.2L99.5 29.0z" fill="#1a1a1a"/>
<path d="M94.5 31.6L97.0 34.4L99.5 31.6z" fill="#1a1a1a"/>
<text x="67.4" y="33.2" font-size="10.6" fill="#111" textLength="14" lengthAdjust="spacingAndGlyphs">1.00</text>
<rect x="107.1" y="24.4" width="0.9" height="12" fill="#f2f4f8"/><rect x="106.3" y="24.4" width="0.8" height="12" fill="#b4bac8"/>
<text x="113" y="34.3" font-size="9.6" fill="#202020" textLength="18.8" lengthAdjust="spacingAndGlyphs">白金</text>
<text x="140.9" y="34.2" font-size="10.6" fill="#202020" textLength="32" lengthAdjust="spacingAndGlyphs">2025/02</text>
<rect x="179.1" y="23.8" width="38.2" height="13.4" fill="#ffffff"/>
<rect x="179.1" y="23.8" width="38.2" height="0.7" fill="#b8bcc8"/>
<rect x="206.1" y="24.6" width="9.8" height="11.8" fill="#e6e6e6"/>
<rect x="206.1" y="30.2" width="9.8" height="0.6" fill="#c4c4c4"/>
<path d="M208.5 29.0L211.0 26.2L213.5 29.0z" fill="#1a1a1a"/>
<path d="M208.5 31.6L211.0 34.4L213.5 31.6z" fill="#1a1a1a"/>
<text x="181.4" y="33.2" font-size="10.6" fill="#111" textLength="14" lengthAdjust="spacingAndGlyphs">1.00</text>
<rect x="221.3" y="24.4" width="0.9" height="12" fill="#f2f4f8"/><rect x="220.5" y="24.4" width="0.8" height="12" fill="#b4bac8"/>
<text x="227.2" y="34.4" font-size="10.2" fill="#202020" textLength="19.4" lengthAdjust="spacingAndGlyphs">分足</text>
<path d="M250.7 29.4L255.3 29.4L253.0 32.2z" fill="#111"/>
<rect x="259.0" y="23.8" width="35.0" height="13.4" fill="#ffffff"/>
<rect x="259.0" y="23.8" width="35.0" height="0.7" fill="#b8bcc8"/>
<rect x="282.8" y="24.6" width="9.8" height="11.8" fill="#e6e6e6"/>
<rect x="282.8" y="30.2" width="9.8" height="0.6" fill="#c4c4c4"/>
<path d="M285.2 29.0L287.7 26.2L290.2 29.0z" fill="#1a1a1a"/>
<path d="M285.2 31.6L287.7 34.4L290.2 31.6z" fill="#1a1a1a"/>
<text x="261.3" y="33.2" font-size="10.6" fill="#111" textLength="17.2" lengthAdjust="spacingAndGlyphs">1200</text>
<text x="299.9" y="34.2" font-size="10.6" fill="#202020" textLength="4.3" lengthAdjust="spacingAndGlyphs">1</text>
<text x="304.4" y="34.4" font-size="10.2" fill="#202020" textLength="19.4" lengthAdjust="spacingAndGlyphs">分足</text>
<path d="M327.1 29.4L331.7 29.4L329.4 32.2z" fill="#111"/>
<rect x="338.5" y="24.4" width="0.9" height="12" fill="#f2f4f8"/><rect x="337.7" y="24.4" width="0.8" height="12" fill="#b4bac8"/>
<rect x="340.4" y="23.2" width="13.4" height="13.6" fill="#dfe0e3"/>
<rect x="340.4" y="23.2" width="13.4" height="1.1" fill="#8e939c"/><rect x="340.4" y="23.2" width="1.1" height="13.6" fill="#8e939c"/>
<rect x="340.4" y="36.0" width="13.4" height="0.8" fill="#f8f8f8"/><rect x="353.0" y="23.2" width="0.8" height="13.6" fill="#f8f8f8"/>
<rect x="344.2" y="24.6" width="1.2" height="11.2" fill="#5a5ac8"/><rect x="341.6" y="27.7" width="11.6" height="1.2" fill="#5a5ac8"/>
<path d="M347.0 30.0L350.6 30.0L349.6 31.0L352.0 33.4L350.6 34.8L348.2 32.4L347.0 33.6z" fill="#a018a8"/>
<rect x="361.3" y="24.4" width="0.9" height="12" fill="#f2f4f8"/><rect x="360.5" y="24.4" width="0.8" height="12" fill="#b4bac8"/>
<rect x="363.4" y="23.2" width="13.6" height="13.6" fill="#b2b6be"/>
<rect x="363.4" y="23.2" width="13.6" height="1.0" fill="#8a8e98"/><rect x="363.4" y="23.2" width="1.0" height="13.6" fill="#8a8e98"/>
<path d="M366.2 26L366.6 34.6L369.0 32.6L372.4 36L374.6 34.2L371.2 31L374.4 29.6z" fill="#dcd4fa" stroke="#6e58cc" stroke-width="1.5" stroke-linejoin="round"/>
<path d="M385.2 35.8C383.6 33.6 382.6 31.8 382.4 30.6C382.4 29.6 383.6 29.4 384.4 30.4L385.2 31.4L385 27C385 25.8 386.6 25.8 386.8 27L387 26C387.2 24.6 388.8 24.6 389 26L389.4 25.6C390 24.6 391.2 25 391.2 26.2L391.6 26.8C392.4 26.4 393 27 393 28L392.8 32.4C392.6 34 392 35 391.4 35.8z" fill="#fff2dc" stroke="#e09a38" stroke-width="1.1" stroke-linejoin="round"/>
<path d="M386.9 27.2L387 30.4M389.1 26.4L389.1 30.2M391.2 27L391.1 30.6" stroke="#e8a850" stroke-width="0.7" fill="none"/>
<path d="M401.4 35.6L402.6 32.2L409.6 24.9L411.9 27.1L404.8 34.4z" fill="#f6b860" stroke="#e89a30" stroke-width="0.9" stroke-linejoin="round"/>
<path d="M403.6 32.6L410.0 26.0" stroke="#fff0d0" stroke-width="0.9"/>
<path d="M401.4 35.6L402.2 33.4L403.6 34.8z" fill="#7a5a30"/>
<path d="M419.4 35.6L420.8 32.0L428.2 24.6L430.6 26.8L423.2 34.4z" fill="#5a96ec" stroke="#2a64d0" stroke-width="0.9" stroke-linejoin="round"/>
<path d="M421.8 32.2L428.4 25.8" stroke="#e4f0ff" stroke-width="1.0"/>
<path d="M428.2 30.4L430.6 32.8L428.2 35.2L425.8 32.8z" fill="#1c4c9c"/>
<rect x="439.1" y="24.4" width="0.9" height="12" fill="#f2f4f8"/><rect x="438.3" y="24.4" width="0.8" height="12" fill="#b4bac8"/>
<rect x="443.3" y="25.2" width="11" height="10.6" fill="#e8ebf0"/>
<rect x="443.3" y="25.2" width="0.9" height="10.6" fill="#8c9098"/><rect x="443.3" y="35.2" width="11" height="0.9" fill="#8c9098"/>
<rect x="444.9" y="31.0" width="1.6" height="4.2" fill="#2088ff"/>
<rect x="447.3" y="26.0" width="1.6" height="9.2" fill="#2088ff"/>
<rect x="449.7" y="28.0" width="1.6" height="7.2" fill="#2088ff"/>
<rect x="452.1" y="31.2" width="1.6" height="4.0" fill="#2088ff"/>
<path d="M456.5 29.4L461.1 29.4L458.8 32.2z" fill="#111"/>
<rect x="465.4" y="25.2" width="11" height="10.6" fill="#e8ebf0"/>
<rect x="465.4" y="25.2" width="0.9" height="10.6" fill="#8c9098"/><rect x="465.4" y="35.2" width="11" height="0.9" fill="#8c9098"/>
<rect x="467.0" y="31.0" width="1.6" height="4.2" fill="#2088ff"/>
<rect x="469.4" y="26.0" width="1.6" height="9.2" fill="#2088ff"/>
<rect x="471.8" y="28.0" width="1.6" height="7.2" fill="#2088ff"/>
<rect x="474.2" y="31.2" width="1.6" height="4.0" fill="#2088ff"/>
<path d="M466.6 26.4L475.4 34.8M475.4 26.4L466.6 34.8" stroke="#e8203c" stroke-width="1.5" fill="none"/>
<rect x="484.5" y="24.4" width="0.9" height="12" fill="#f2f4f8"/><rect x="483.7" y="24.4" width="0.8" height="12" fill="#b4bac8"/>
<path d="M496.2 34.6A4.6 4.6 0 1 1 493.6 26.2" stroke="#2292e6" stroke-width="2.0" fill="none"/>
<path d="M491.6 24.2L496.4 25.6L492.6 28.6z" fill="#1a6cd8"/>
<text x="494.6" y="33.6" font-size="7.4" font-weight="bold" fill="#2a7ae0" textLength="4.6" lengthAdjust="spacingAndGlyphs">R</text>
<path d="M1001.8 34.8L1006.8 29.8" stroke="#7c7cf4" stroke-width="2.3" stroke-linecap="round"/>
<circle cx="1008.4" cy="28.0" r="3.3" fill="#8888f6"/>
<path d="M1008.2 27.6L1009.6 23.6L1013.4 26.4z" fill="#cfd3dd"/>
<path d="M1003.4 33.2L1006.2 30.4" stroke="#e4e4ff" stroke-width="0.8"/>
</svg>
</body></html>
